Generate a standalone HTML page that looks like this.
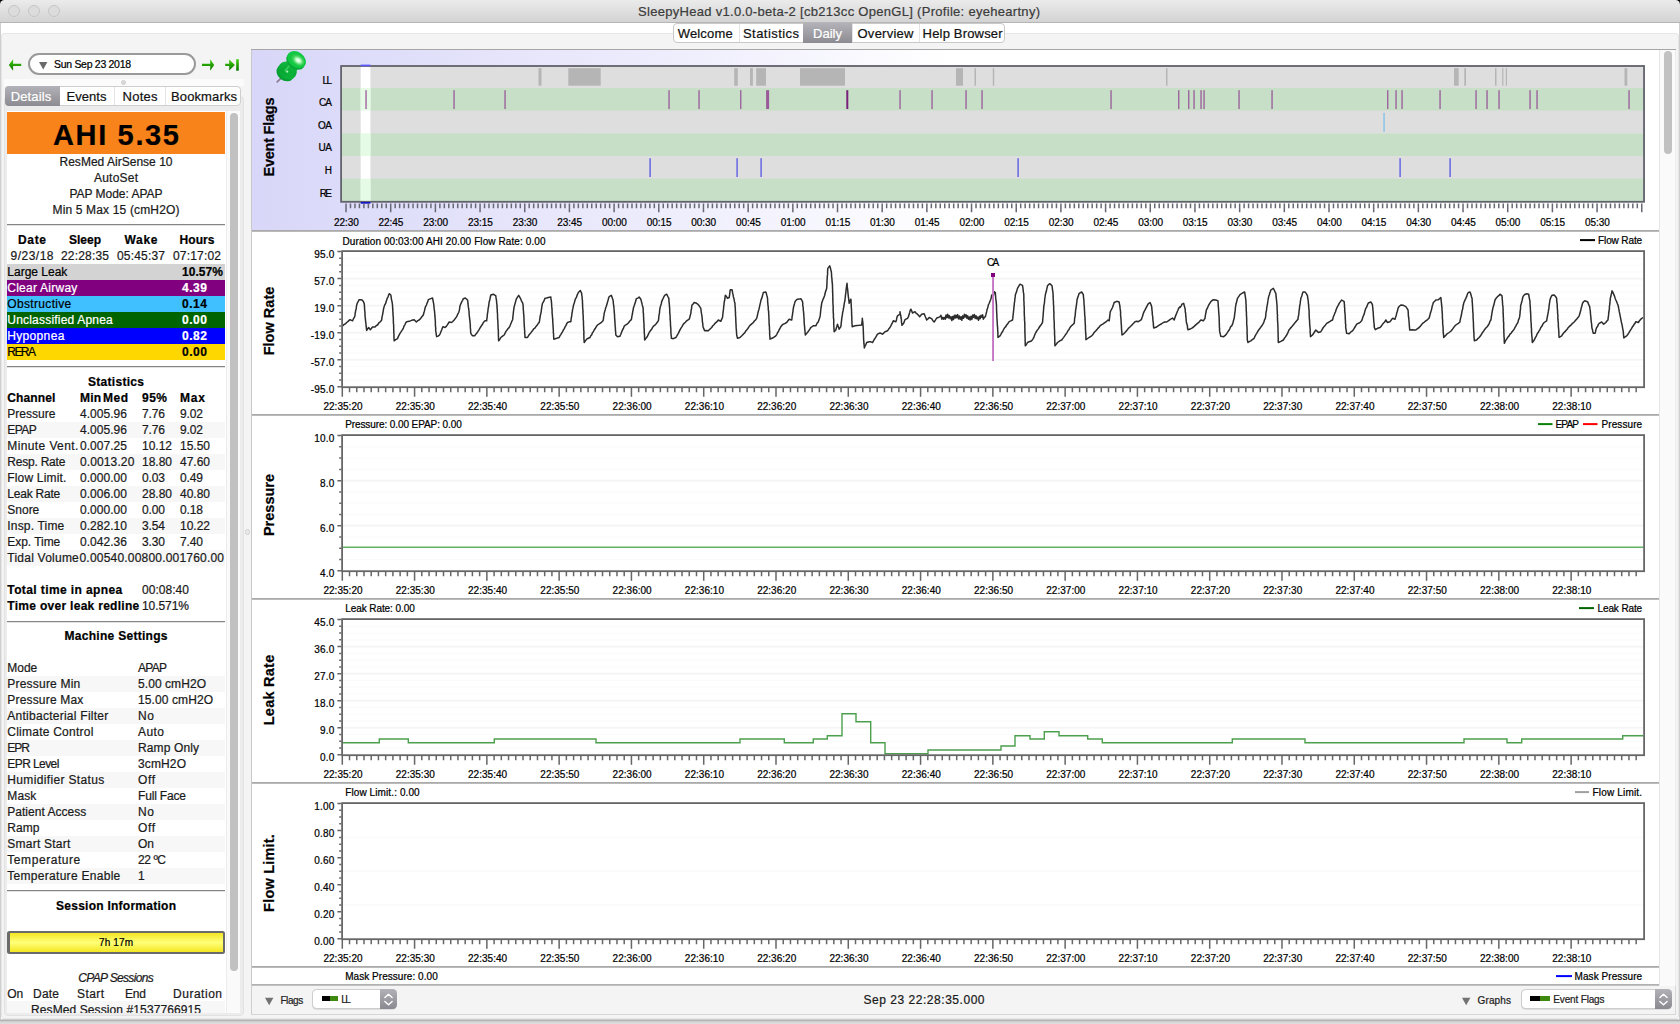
<!DOCTYPE html>
<html><head><meta charset="utf-8"><title>SleepyHead</title>
<style>
html,body{margin:0;padding:0;}
body{width:1680px;height:1024px;position:relative;overflow:hidden;background:#fff;font-family:"Liberation Sans",sans-serif;}
.t{position:absolute;white-space:nowrap;display:block;-webkit-text-stroke:0.22px currentColor;}
.b{position:absolute;box-sizing:border-box;}
svg{position:absolute;left:0;top:0;}
</style></head><body>
<div class="b" style="left:0px;top:0px;width:1680px;height:5px;background:#000;"></div>
<div class="b" style="left:0px;top:0px;width:1680px;height:22.5px;background:linear-gradient(#ebebeb,#d3d3d3);border-bottom:1.5px solid #b6b6b6;border-radius:4.5px 4.5px 0 0;"></div>
<div class="b" style="left:7.5px;top:5px;width:12px;height:12px;border-radius:6px;background:#dcdcdc;border:1px solid #c6c6c6;"></div>
<div class="b" style="left:27.5px;top:5px;width:12px;height:12px;border-radius:6px;background:#dcdcdc;border:1px solid #c6c6c6;"></div>
<div class="b" style="left:47.5px;top:5px;width:12px;height:12px;border-radius:6px;background:#dcdcdc;border:1px solid #c6c6c6;"></div>
<span class="t" style="left:638.00px;top:2.50px;font-size:13px;line-height:17px;color:#3c3c3c;letter-spacing:0.295px;">SleepyHead v1.0.0-beta-2 [cb213cc OpenGL] (Profile: eyeheartny)</span>
<div class="b" style="left:1px;top:33px;width:1678px;height:986px;background:#f4f4f4;border:1px solid #e6e6e6;border-radius:3px;"></div>
<div class="b" style="left:4px;top:96px;width:240px;height:920px;background:#ececec;border:1px solid #e2e2e2;border-radius:4px;"></div>
<div class="b" style="left:0px;top:23px;width:1px;height:1001px;background:#cfcfcf;"></div>
<div class="b" style="left:1679px;top:23px;width:1px;height:1001px;background:#cfcfcf;"></div>
<div class="b" style="left:0px;top:1019px;width:1680px;height:5px;background:linear-gradient(#e6e6e6 0px,#b4b4b4 1px,#b4b4b4 2px,#d6d6d6 2.7px,#dedede 5px);"></div>
<div class="b" style="left:673px;top:23px;width:332px;height:20px;background:#fff;border:1px solid #c9c9c9;border-radius:4px;"></div>
<div class="b" style="left:739px;top:24px;width:1px;height:18px;background:#e4e4e4;"></div>
<div class="b" style="left:803px;top:23px;width:49px;height:20px;background:linear-gradient(#b3b2b8,#8c8b91);"></div>
<div class="b" style="left:852px;top:24px;width:1px;height:18px;background:#e4e4e4;"></div>
<div class="b" style="left:919px;top:24px;width:1px;height:18px;background:#e4e4e4;"></div>
<span class="t" style="left:677.70px;top:24.50px;font-size:13px;line-height:17px;color:#111;letter-spacing:0.176px;">Welcome</span>
<span class="t" style="left:743.00px;top:24.50px;font-size:13px;line-height:17px;color:#111;letter-spacing:0.443px;">Statistics</span>
<span class="t" style="left:813.00px;top:24.50px;font-size:13px;line-height:17px;color:#fff;letter-spacing:0.027px;">Daily</span>
<span class="t" style="left:857.50px;top:24.50px;font-size:13px;line-height:17px;color:#111;letter-spacing:0.260px;">Overview</span>
<span class="t" style="left:922.60px;top:24.50px;font-size:13px;line-height:17px;color:#111;letter-spacing:0.180px;">Help Browser</span>
<svg width="250" height="80" viewBox="0 0 250 80">
<defs><linearGradient id="ga" x1="0" y1="0" x2="0" y2="1"><stop offset="0" stop-color="#45d216"/><stop offset="0.5" stop-color="#25a000"/><stop offset="1" stop-color="#0a7400"/></linearGradient></defs>
<g fill="url(#ga)" stroke="none">
<path d="M8.8 65 L13.1 59.3 L13.1 63.8 L21.2 63.8 L21.2 66.1 L13.1 66.1 L13.1 70.7 Z"/>
<path d="M214.2 65 L210.2 59.2 L210.2 63.8 L202 63.8 L202 66.1 L210.2 66.1 L210.2 70.7 Z"/>
<path d="M234.9 65 L229.2 59.5 L229.2 63.8 L225.2 63.8 L225.2 66.1 L229.2 66.1 L229.2 70.6 Z"/>
<rect x="236.2" y="59.2" width="2.6" height="11.5"/>
</g></svg>
<div class="b" style="left:28px;top:53px;width:168px;height:22px;background:#fff;border:2px solid #9a9a9a;border-radius:11px;"></div>
<svg width="250" height="80"><path d="M39 62 L47.4 62 L43.2 69.6 Z" fill="#6a6a6a"/></svg>
<span class="t" style="left:54.00px;top:57.00px;font-size:10.5px;line-height:14px;color:#000;letter-spacing:-0.296px;">Sun Sep 23 2018</span>
<div class="b" style="left:4px;top:79px;width:240px;height:7px;background:#fbfbfb;"></div>
<div class="b" style="left:121px;top:79.5px;width:5px;height:5px;border-radius:3px;background:#d9d9d9;border:1px solid #cfcfcf;"></div>
<div class="b" style="left:5px;top:86px;width:236px;height:20px;background:#fff;border:1px solid #cfcfcf;border-radius:4px;"></div>
<div class="b" style="left:5px;top:86px;width:55px;height:20px;background:linear-gradient(#b3b2b8,#8c8b91);border-radius:4px 0 0 4px;"></div>
<div class="b" style="left:114px;top:87px;width:1px;height:18px;background:#e4e4e4;"></div>
<div class="b" style="left:165px;top:87px;width:1px;height:18px;background:#e4e4e4;"></div>
<span class="t" style="left:10.75px;top:87.50px;font-size:13px;line-height:17px;color:#fff;letter-spacing:0.128px;">Details</span>
<span class="t" style="left:66.50px;top:87.50px;font-size:13px;line-height:17px;color:#111;letter-spacing:0.052px;">Events</span>
<span class="t" style="left:122.50px;top:87.50px;font-size:13px;line-height:17px;color:#111;letter-spacing:0.260px;">Notes</span>
<span class="t" style="left:171.00px;top:87.50px;font-size:13px;line-height:17px;color:#111;letter-spacing:0.123px;">Bookmarks</span>
<div class="b" style="left:6.5px;top:111px;width:219.5px;height:902px;background:#fff;"></div>
<div class="b" style="left:226px;top:111px;width:14px;height:902px;background:#fafafa;border-left:1px solid #ececec;"></div>
<div class="b" style="left:229.5px;top:113px;width:8px;height:858px;background:#c1c1c1;border-radius:4px;"></div>
<div class="b" style="left:7px;top:112px;width:218px;height:41.5px;background:#f8831b;"></div>
<span class="t" style="left:53.00px;top:115.50px;font-size:29px;line-height:38px;color:#000;font-weight:bold;letter-spacing:1.651px;">AHI 5.35</span>
<span class="t" style="left:59.50px;top:154.00px;font-size:12px;line-height:16px;color:#1a1a1a;letter-spacing:0.016px;">ResMed AirSense 10</span>
<span class="t" style="left:94.00px;top:170.00px;font-size:12px;line-height:16px;color:#1a1a1a;letter-spacing:0.217px;">AutoSet</span>
<span class="t" style="left:69.50px;top:186.00px;font-size:12px;line-height:16px;color:#1a1a1a;letter-spacing:-0.030px;">PAP Mode: APAP</span>
<span class="t" style="left:52.50px;top:202.00px;font-size:12px;line-height:16px;color:#1a1a1a;letter-spacing:0.156px;">Min 5 Max 15 (cmH2O)</span>
<div class="b" style="left:7px;top:224px;width:218px;height:2px;border-top:1px solid #858585;border-bottom:1px solid #e2e2e2;"></div>
<span class="t" style="left:18.00px;top:232.00px;font-size:12px;line-height:16px;color:#000;font-weight:bold;letter-spacing:0.664px;">Date</span>
<span class="t" style="left:69.00px;top:232.00px;font-size:12px;line-height:16px;color:#000;font-weight:bold;">Sleep</span>
<span class="t" style="left:124.50px;top:232.00px;font-size:12px;line-height:16px;color:#000;font-weight:bold;letter-spacing:0.699px;">Wake</span>
<span class="t" style="left:179.50px;top:232.00px;font-size:12px;line-height:16px;color:#000;font-weight:bold;letter-spacing:0.083px;">Hours</span>
<span class="t" style="left:10.50px;top:248.00px;font-size:12px;line-height:16px;color:#1a1a1a;letter-spacing:0.494px;">9/23/18</span>
<span class="t" style="left:61.00px;top:248.00px;font-size:12px;line-height:16px;color:#1a1a1a;letter-spacing:0.184px;">22:28:35</span>
<span class="t" style="left:117.00px;top:248.00px;font-size:12px;line-height:16px;color:#1a1a1a;letter-spacing:0.184px;">05:45:37</span>
<span class="t" style="left:173.00px;top:248.00px;font-size:12px;line-height:16px;color:#1a1a1a;letter-spacing:0.184px;">07:17:02</span>
<div class="b" style="left:7px;top:264px;width:218px;height:16px;background:#d3d3d3;"></div>
<span class="t" style="left:7.30px;top:264.00px;font-size:12px;line-height:16px;color:#000;letter-spacing:-0.005px;">Large Leak</span>
<span class="t" style="left:182.00px;top:264.00px;font-size:12px;line-height:16px;color:#000;font-weight:bold;letter-spacing:0.060px;">10.57%</span>
<div class="b" style="left:7px;top:280px;width:218px;height:16px;background:#800080;"></div>
<span class="t" style="left:7.30px;top:280.00px;font-size:12px;line-height:16px;color:#fff;letter-spacing:0.241px;">Clear Airway</span>
<span class="t" style="left:182.00px;top:280.00px;font-size:12px;line-height:16px;color:#fff;font-weight:bold;letter-spacing:0.548px;">4.39</span>
<div class="b" style="left:7px;top:296px;width:218px;height:16px;background:#40c0ff;"></div>
<span class="t" style="left:7.30px;top:296.00px;font-size:12px;line-height:16px;color:#000;letter-spacing:0.331px;">Obstructive</span>
<span class="t" style="left:182.00px;top:296.00px;font-size:12px;line-height:16px;color:#000;font-weight:bold;letter-spacing:0.548px;">0.14</span>
<div class="b" style="left:7px;top:312px;width:218px;height:16px;background:#006400;"></div>
<span class="t" style="left:7.30px;top:312.00px;font-size:12px;line-height:16px;color:#fff;letter-spacing:0.202px;">Unclassified Apnea</span>
<span class="t" style="left:182.00px;top:312.00px;font-size:12px;line-height:16px;color:#fff;font-weight:bold;letter-spacing:0.548px;">0.00</span>
<div class="b" style="left:7px;top:328px;width:218px;height:16px;background:#0000ff;"></div>
<span class="t" style="left:7.30px;top:328.00px;font-size:12px;line-height:16px;color:#fff;letter-spacing:0.328px;">Hypopnea</span>
<span class="t" style="left:182.00px;top:328.00px;font-size:12px;line-height:16px;color:#fff;font-weight:bold;letter-spacing:0.548px;">0.82</span>
<div class="b" style="left:7px;top:344px;width:218px;height:16px;background:#ffd700;"></div>
<span class="t" style="left:7.30px;top:344.00px;font-size:12px;line-height:16px;color:#000;letter-spacing:-1.580px;">RERA</span>
<span class="t" style="left:182.00px;top:344.00px;font-size:12px;line-height:16px;color:#000;font-weight:bold;letter-spacing:0.548px;">0.00</span>
<div class="b" style="left:7px;top:366px;width:218px;height:2px;border-top:1px solid #858585;border-bottom:1px solid #e2e2e2;"></div>
<span class="t" style="left:88.00px;top:374.00px;font-size:12px;line-height:16px;color:#000;font-weight:bold;letter-spacing:0.294px;">Statistics</span>
<span class="t" style="left:7.30px;top:390.00px;font-size:12px;line-height:16px;color:#000;font-weight:bold;letter-spacing:0.111px;">Channel</span>
<span class="t" style="left:80.00px;top:390.00px;font-size:12px;line-height:16px;color:#000;font-weight:bold;letter-spacing:0.170px;">Min</span>
<span class="t" style="left:103.00px;top:390.00px;font-size:12px;line-height:16px;color:#000;font-weight:bold;letter-spacing:0.500px;">Med</span>
<span class="t" style="left:142.00px;top:390.00px;font-size:12px;line-height:16px;color:#000;font-weight:bold;letter-spacing:0.491px;">95%</span>
<span class="t" style="left:180.00px;top:390.00px;font-size:12px;line-height:16px;color:#000;font-weight:bold;letter-spacing:0.828px;">Max</span>
<span class="t" style="left:7.30px;top:406.00px;font-size:12px;line-height:16px;color:#1a1a1a;">Pressure</span>
<span class="t" style="left:80.00px;top:406.00px;font-size:12px;line-height:16px;color:#1a1a1a;letter-spacing:0.042px;">4.005.96</span>
<span class="t" style="left:142.00px;top:406.00px;font-size:12px;line-height:16px;color:#1a1a1a;letter-spacing:-0.118px;">7.76</span>
<span class="t" style="left:180.00px;top:406.00px;font-size:12px;line-height:16px;color:#1a1a1a;letter-spacing:-0.118px;">9.02</span>
<div class="b" style="left:7px;top:422px;width:218px;height:16px;background:#f7f7f7;"></div>
<span class="t" style="left:7.30px;top:422.00px;font-size:12px;line-height:16px;color:#1a1a1a;letter-spacing:-0.543px;">EPAP</span>
<span class="t" style="left:80.00px;top:422.00px;font-size:12px;line-height:16px;color:#1a1a1a;letter-spacing:0.042px;">4.005.96</span>
<span class="t" style="left:142.00px;top:422.00px;font-size:12px;line-height:16px;color:#1a1a1a;letter-spacing:-0.118px;">7.76</span>
<span class="t" style="left:180.00px;top:422.00px;font-size:12px;line-height:16px;color:#1a1a1a;letter-spacing:-0.118px;">9.02</span>
<span class="t" style="left:7.30px;top:438.00px;font-size:12px;line-height:16px;color:#1a1a1a;letter-spacing:0.390px;">Minute Vent.</span>
<span class="t" style="left:80.00px;top:438.00px;font-size:12px;line-height:16px;color:#1a1a1a;letter-spacing:0.042px;">0.007.25</span>
<span class="t" style="left:142.00px;top:438.00px;font-size:12px;line-height:16px;color:#1a1a1a;letter-spacing:-0.007px;">10.12</span>
<span class="t" style="left:180.00px;top:438.00px;font-size:12px;line-height:16px;color:#1a1a1a;letter-spacing:-0.007px;">15.50</span>
<div class="b" style="left:7px;top:454px;width:218px;height:16px;background:#f7f7f7;"></div>
<span class="t" style="left:7.30px;top:454.00px;font-size:12px;line-height:16px;color:#1a1a1a;letter-spacing:-0.225px;">Resp. Rate</span>
<span class="t" style="left:80.00px;top:454.00px;font-size:12px;line-height:16px;color:#1a1a1a;letter-spacing:0.115px;">0.0013.20</span>
<span class="t" style="left:142.00px;top:454.00px;font-size:12px;line-height:16px;color:#1a1a1a;letter-spacing:-0.007px;">18.80</span>
<span class="t" style="left:180.00px;top:454.00px;font-size:12px;line-height:16px;color:#1a1a1a;letter-spacing:-0.007px;">47.60</span>
<span class="t" style="left:7.30px;top:470.00px;font-size:12px;line-height:16px;color:#1a1a1a;letter-spacing:0.166px;">Flow Limit.</span>
<span class="t" style="left:80.00px;top:470.00px;font-size:12px;line-height:16px;color:#1a1a1a;letter-spacing:0.042px;">0.000.00</span>
<span class="t" style="left:142.00px;top:470.00px;font-size:12px;line-height:16px;color:#1a1a1a;letter-spacing:-0.118px;">0.03</span>
<span class="t" style="left:180.00px;top:470.00px;font-size:12px;line-height:16px;color:#1a1a1a;letter-spacing:-0.118px;">0.49</span>
<div class="b" style="left:7px;top:486px;width:218px;height:16px;background:#f7f7f7;"></div>
<span class="t" style="left:7.30px;top:486.00px;font-size:12px;line-height:16px;color:#1a1a1a;letter-spacing:-0.213px;">Leak Rate</span>
<span class="t" style="left:80.00px;top:486.00px;font-size:12px;line-height:16px;color:#1a1a1a;letter-spacing:0.042px;">0.006.00</span>
<span class="t" style="left:142.00px;top:486.00px;font-size:12px;line-height:16px;color:#1a1a1a;letter-spacing:-0.007px;">28.80</span>
<span class="t" style="left:180.00px;top:486.00px;font-size:12px;line-height:16px;color:#1a1a1a;letter-spacing:-0.007px;">40.80</span>
<span class="t" style="left:7.30px;top:502.00px;font-size:12px;line-height:16px;color:#1a1a1a;letter-spacing:-0.005px;">Snore</span>
<span class="t" style="left:80.00px;top:502.00px;font-size:12px;line-height:16px;color:#1a1a1a;letter-spacing:0.042px;">0.000.00</span>
<span class="t" style="left:142.00px;top:502.00px;font-size:12px;line-height:16px;color:#1a1a1a;letter-spacing:-0.118px;">0.00</span>
<span class="t" style="left:180.00px;top:502.00px;font-size:12px;line-height:16px;color:#1a1a1a;letter-spacing:-0.118px;">0.18</span>
<div class="b" style="left:7px;top:518px;width:218px;height:16px;background:#f7f7f7;"></div>
<span class="t" style="left:7.30px;top:518.00px;font-size:12px;line-height:16px;color:#1a1a1a;letter-spacing:0.183px;">Insp. Time</span>
<span class="t" style="left:80.00px;top:518.00px;font-size:12px;line-height:16px;color:#1a1a1a;letter-spacing:0.042px;">0.282.10</span>
<span class="t" style="left:142.00px;top:518.00px;font-size:12px;line-height:16px;color:#1a1a1a;letter-spacing:-0.118px;">3.54</span>
<span class="t" style="left:180.00px;top:518.00px;font-size:12px;line-height:16px;color:#1a1a1a;letter-spacing:-0.007px;">10.22</span>
<span class="t" style="left:7.30px;top:534.00px;font-size:12px;line-height:16px;color:#1a1a1a;letter-spacing:-0.044px;">Exp. Time</span>
<span class="t" style="left:80.00px;top:534.00px;font-size:12px;line-height:16px;color:#1a1a1a;letter-spacing:0.042px;">0.042.36</span>
<span class="t" style="left:142.00px;top:534.00px;font-size:12px;line-height:16px;color:#1a1a1a;letter-spacing:-0.118px;">3.30</span>
<span class="t" style="left:180.00px;top:534.00px;font-size:12px;line-height:16px;color:#1a1a1a;letter-spacing:-0.118px;">7.40</span>
<div class="b" style="left:7px;top:550px;width:218px;height:16px;background:#f7f7f7;"></div>
<span class="t" style="left:7.30px;top:550.00px;font-size:12px;line-height:16px;color:#1a1a1a;letter-spacing:0.234px;">Tidal Volume</span>
<span class="t" style="left:79.50px;top:550.00px;font-size:12px;line-height:16px;color:#1a1a1a;letter-spacing:0.199px;">0.00540.00800.001760.00</span>
<span class="t" style="left:7.30px;top:582.00px;font-size:12px;line-height:16px;color:#000;font-weight:bold;letter-spacing:0.400px;">Total time in apnea</span>
<span class="t" style="left:142.00px;top:582.00px;font-size:12px;line-height:16px;color:#1a1a1a;letter-spacing:0.042px;">00:08:40</span>
<span class="t" style="left:7.30px;top:598.00px;font-size:12px;line-height:16px;color:#000;font-weight:bold;letter-spacing:0.293px;">Time over leak redline</span>
<span class="t" style="left:142.00px;top:598.00px;font-size:12px;line-height:16px;color:#1a1a1a;letter-spacing:-0.062px;">10.571%</span>
<div class="b" style="left:7px;top:621px;width:218px;height:2px;border-top:1px solid #858585;border-bottom:1px solid #e2e2e2;"></div>
<span class="t" style="left:64.50px;top:628.00px;font-size:12px;line-height:16px;color:#000;font-weight:bold;letter-spacing:0.288px;">Machine Settings</span>
<span class="t" style="left:7.30px;top:660.00px;font-size:12px;line-height:16px;color:#1a1a1a;letter-spacing:-0.006px;">Mode</span>
<span class="t" style="left:138.00px;top:660.00px;font-size:12px;line-height:16px;color:#1a1a1a;letter-spacing:-0.709px;">APAP</span>
<div class="b" style="left:7px;top:676px;width:218px;height:16px;background:#f7f7f7;"></div>
<span class="t" style="left:7.30px;top:676.00px;font-size:12px;line-height:16px;color:#1a1a1a;letter-spacing:0.210px;">Pressure Min</span>
<span class="t" style="left:138.00px;top:676.00px;font-size:12px;line-height:16px;color:#1a1a1a;letter-spacing:0.071px;">5.00 cmH2O</span>
<span class="t" style="left:7.30px;top:692.00px;font-size:12px;line-height:16px;color:#1a1a1a;letter-spacing:0.180px;">Pressure Max</span>
<span class="t" style="left:138.00px;top:692.00px;font-size:12px;line-height:16px;color:#1a1a1a;letter-spacing:0.097px;">15.00 cmH2O</span>
<div class="b" style="left:7px;top:708px;width:218px;height:16px;background:#f7f7f7;"></div>
<span class="t" style="left:7.30px;top:708.00px;font-size:12px;line-height:16px;color:#1a1a1a;letter-spacing:0.261px;">Antibacterial Filter</span>
<span class="t" style="left:138.00px;top:708.00px;font-size:12px;line-height:16px;color:#1a1a1a;letter-spacing:0.661px;">No</span>
<span class="t" style="left:7.30px;top:724.00px;font-size:12px;line-height:16px;color:#1a1a1a;letter-spacing:0.236px;">Climate Control</span>
<span class="t" style="left:138.00px;top:724.00px;font-size:12px;line-height:16px;color:#1a1a1a;letter-spacing:0.438px;">Auto</span>
<div class="b" style="left:7px;top:740px;width:218px;height:16px;background:#f7f7f7;"></div>
<span class="t" style="left:7.30px;top:740.00px;font-size:12px;line-height:16px;color:#1a1a1a;letter-spacing:-1.088px;">EPR</span>
<span class="t" style="left:138.00px;top:740.00px;font-size:12px;line-height:16px;color:#1a1a1a;letter-spacing:0.123px;">Ramp Only</span>
<span class="t" style="left:7.30px;top:756.00px;font-size:12px;line-height:16px;color:#1a1a1a;letter-spacing:-0.587px;">EPR Level</span>
<span class="t" style="left:138.00px;top:756.00px;font-size:12px;line-height:16px;color:#1a1a1a;letter-spacing:0.131px;">3cmH2O</span>
<div class="b" style="left:7px;top:772px;width:218px;height:16px;background:#f7f7f7;"></div>
<span class="t" style="left:7.30px;top:772.00px;font-size:12px;line-height:16px;color:#1a1a1a;letter-spacing:0.352px;">Humidifier Status</span>
<span class="t" style="left:138.00px;top:772.00px;font-size:12px;line-height:16px;color:#1a1a1a;letter-spacing:0.607px;">Off</span>
<span class="t" style="left:7.30px;top:788.00px;font-size:12px;line-height:16px;color:#1a1a1a;letter-spacing:0.110px;">Mask</span>
<span class="t" style="left:138.00px;top:788.00px;font-size:12px;line-height:16px;color:#1a1a1a;letter-spacing:-0.168px;">Full Face</span>
<div class="b" style="left:7px;top:804px;width:218px;height:16px;background:#f7f7f7;"></div>
<span class="t" style="left:7.30px;top:804.00px;font-size:12px;line-height:16px;color:#1a1a1a;letter-spacing:0.022px;">Patient Access</span>
<span class="t" style="left:138.00px;top:804.00px;font-size:12px;line-height:16px;color:#1a1a1a;letter-spacing:0.661px;">No</span>
<span class="t" style="left:7.30px;top:820.00px;font-size:12px;line-height:16px;color:#1a1a1a;">Ramp</span>
<span class="t" style="left:138.00px;top:820.00px;font-size:12px;line-height:16px;color:#1a1a1a;letter-spacing:0.607px;">Off</span>
<div class="b" style="left:7px;top:836px;width:218px;height:16px;background:#f7f7f7;"></div>
<span class="t" style="left:7.30px;top:836.00px;font-size:12px;line-height:16px;color:#1a1a1a;letter-spacing:0.232px;">Smart Start</span>
<span class="t" style="left:138.00px;top:836.00px;font-size:12px;line-height:16px;color:#1a1a1a;letter-spacing:-0.008px;">On</span>
<span class="t" style="left:7.30px;top:852.00px;font-size:12px;line-height:16px;color:#1a1a1a;letter-spacing:0.563px;">Temperature</span>
<span class="t" style="left:138.00px;top:852.00px;font-size:12px;line-height:16px;color:#1a1a1a;letter-spacing:-0.432px;">22 ºC</span>
<div class="b" style="left:7px;top:868px;width:218px;height:16px;background:#f7f7f7;"></div>
<span class="t" style="left:7.30px;top:868.00px;font-size:12px;line-height:16px;color:#1a1a1a;letter-spacing:0.290px;">Temperature Enable</span>
<span class="t" style="left:138.00px;top:868.00px;font-size:12px;line-height:16px;color:#1a1a1a;">1</span>
<div class="b" style="left:7px;top:890px;width:218px;height:2px;border-top:1px solid #858585;border-bottom:1px solid #e2e2e2;"></div>
<span class="t" style="left:56.00px;top:898.00px;font-size:12px;line-height:16px;color:#000;font-weight:bold;letter-spacing:0.258px;">Session Information</span>
<div class="b" style="left:7px;top:930.5px;width:218px;height:23.3px;background:linear-gradient(#f3e622,#ffff78 50%,#f3e622);border:2.4px solid #6a6a6a;border-left-width:3px;border-right-width:2.6px;border-radius:2.5px;"></div>
<span class="t" style="left:99.00px;top:935.50px;font-size:10px;line-height:13px;color:#000;letter-spacing:0.130px;">7h 17m</span>
<span class="t" style="left:78.25px;top:970.00px;font-size:12px;line-height:16px;color:#1a1a1a;font-style:italic;letter-spacing:-0.656px;">CPAP Sessions</span>
<span class="t" style="left:7.30px;top:986.00px;font-size:12px;line-height:16px;color:#1a1a1a;letter-spacing:-0.008px;">On</span>
<span class="t" style="left:33.00px;top:986.00px;font-size:12px;line-height:16px;color:#1a1a1a;letter-spacing:0.218px;">Date</span>
<span class="t" style="left:77.00px;top:986.00px;font-size:12px;line-height:16px;color:#1a1a1a;letter-spacing:0.414px;">Start</span>
<span class="t" style="left:125.00px;top:986.00px;font-size:12px;line-height:16px;color:#1a1a1a;letter-spacing:-0.176px;">End</span>
<span class="t" style="left:173.00px;top:986.00px;font-size:12px;line-height:16px;color:#1a1a1a;letter-spacing:0.521px;">Duration</span>
<div class="b" style="left:7px;top:1001px;width:218px;height:12px;background:#f7f7f7;"></div>
<div class="b" style="left:4px;top:1000px;width:222px;height:13px;overflow:hidden;">
<span class="t" style="left:27.00px;top:2.00px;font-size:12px;line-height:16px;color:#1a1a1a;letter-spacing:0.102px;">ResMed Session #1537766915</span>
</div>
<div class="b" style="left:244.7px;top:529.2px;width:5.6px;height:5.6px;border-radius:2.8px;background:#e9e9e9;border:1px solid #d0d0d0;"></div>
<div class="b" style="left:251px;top:49px;width:1409px;height:183px;background:linear-gradient(90deg,#d8d7f9 0px,#d9d8f9 30px,#e8e7fb 300px,#f1f0fd 470px,#fff 700px);"></div>
<div class="b" style="left:251px;top:230px;width:1408px;height:2px;background:linear-gradient(#a2a2a2,#c2c2c2);"></div>
<div class="b" style="left:251px;top:232px;width:1409px;height:182px;background:#fff;"></div>
<div class="b" style="left:251px;top:414px;width:1408px;height:2px;background:linear-gradient(#a2a2a2,#c2c2c2);"></div>
<div class="b" style="left:251px;top:416px;width:1409px;height:182px;background:#fff;"></div>
<div class="b" style="left:251px;top:598px;width:1408px;height:2px;background:linear-gradient(#a2a2a2,#c2c2c2);"></div>
<div class="b" style="left:251px;top:600px;width:1409px;height:182px;background:#fff;"></div>
<div class="b" style="left:251px;top:782px;width:1408px;height:2px;background:linear-gradient(#a2a2a2,#c2c2c2);"></div>
<div class="b" style="left:251px;top:784px;width:1409px;height:182px;background:#fff;"></div>
<div class="b" style="left:251px;top:966px;width:1408px;height:2px;background:linear-gradient(#a2a2a2,#c2c2c2);"></div>
<div class="b" style="left:251px;top:968px;width:1409px;height:16px;background:#fff;"></div>
<div class="b" style="left:251px;top:984px;width:1408px;height:2px;background:linear-gradient(#a8a8a8,#cacaca);"></div>
<div class="b" style="left:251px;top:49px;width:1px;height:937px;background:#c8c8c8;"></div>
<div class="b" style="left:1659px;top:49px;width:17px;height:937px;background:#fafafa;border-left:1px solid #e6e6e6;border-right:1px solid #ededed;"></div>
<div class="b" style="left:1663.5px;top:51px;width:8.5px;height:102.5px;background:#c1c1c1;border-radius:4.25px;"></div>
<div class="b" style="left:251px;top:49px;width:1425px;height:1px;background:#a6a6a6;"></div>
<svg width="1680" height="1024" viewBox="0 0 1680 1024" shape-rendering="auto"><rect x="341.3" y="65.30" width="1303.1000000000001" height="22.97" fill="#dedede"/><rect x="341.3" y="87.97" width="1303.1000000000001" height="22.97" fill="#c6dfc6"/><rect x="341.3" y="110.64" width="1303.1000000000001" height="22.97" fill="#dedede"/><rect x="341.3" y="133.31" width="1303.1000000000001" height="22.97" fill="#c6dfc6"/><rect x="341.3" y="155.98" width="1303.1000000000001" height="22.97" fill="#dedede"/><rect x="341.3" y="178.65" width="1303.1000000000001" height="22.97" fill="#c6dfc6"/><rect x="360.7" y="66" width="9.7" height="136" fill="#fff"/><rect x="360.7" y="87.97" width="9.7" height="22.67" fill="#e6fbe6"/><rect x="360.7" y="133.31" width="9.7" height="22.67" fill="#e6fbe6"/><rect x="360.7" y="178.65" width="9.7" height="22.67" fill="#e6fbe6"/><rect x="538.5" y="68.2" width="3.00" height="17.5" fill="#b5b5b5"/><rect x="568.3" y="68.2" width="32.40" height="17.5" fill="#b5b5b5"/><rect x="734.2" y="68.2" width="3.60" height="17.5" fill="#b5b5b5"/><rect x="750" y="68.2" width="2.90" height="17.5" fill="#b5b5b5"/><rect x="756.2" y="68.2" width="9.80" height="17.5" fill="#b5b5b5"/><rect x="800" y="68.2" width="45.00" height="17.5" fill="#b5b5b5"/><rect x="956" y="68.2" width="7.00" height="17.5" fill="#b5b5b5"/><rect x="974.5" y="68.2" width="1.50" height="17.5" fill="#b5b5b5"/><rect x="992.8" y="68.2" width="1.40" height="17.5" fill="#b5b5b5"/><rect x="1166" y="68.2" width="1.50" height="17.5" fill="#b5b5b5"/><rect x="1454" y="68.2" width="4.70" height="17.5" fill="#b5b5b5"/><rect x="1464.3" y="68.2" width="1.70" height="17.5" fill="#b5b5b5"/><rect x="1495" y="68.2" width="1.50" height="17.5" fill="#b5b5b5"/><rect x="1502.2" y="68.2" width="1.20" height="17.5" fill="#b5b5b5"/><rect x="1505.8" y="68.2" width="1.20" height="17.5" fill="#b5b5b5"/><rect x="1624.5" y="68.2" width="2.80" height="17.5" fill="#b5b5b5"/><rect x="365.40" y="90.17" width="1.3" height="18.87" fill="#9a5a9a"/><rect x="453.40" y="90.17" width="1.3" height="18.87" fill="#9a5a9a"/><rect x="504.40" y="90.17" width="1.3" height="18.87" fill="#9a5a9a"/><rect x="668.40" y="90.17" width="1.3" height="18.87" fill="#9a5a9a"/><rect x="698.40" y="90.17" width="1.3" height="18.87" fill="#9a5a9a"/><rect x="740.10" y="90.17" width="1.3" height="18.87" fill="#9a5a9a"/><rect x="899.40" y="90.17" width="1.3" height="18.87" fill="#9a5a9a"/><rect x="931.40" y="90.17" width="1.3" height="18.87" fill="#9a5a9a"/><rect x="965.40" y="90.17" width="1.3" height="18.87" fill="#9a5a9a"/><rect x="981.40" y="90.17" width="1.3" height="18.87" fill="#9a5a9a"/><rect x="1110.40" y="90.17" width="1.3" height="18.87" fill="#9a5a9a"/><rect x="1178.10" y="90.17" width="1.3" height="18.87" fill="#9a5a9a"/><rect x="1188.10" y="90.17" width="1.3" height="18.87" fill="#9a5a9a"/><rect x="1193.40" y="90.17" width="1.3" height="18.87" fill="#9a5a9a"/><rect x="1200.40" y="90.17" width="1.3" height="18.87" fill="#9a5a9a"/><rect x="1203.40" y="90.17" width="1.3" height="18.87" fill="#9a5a9a"/><rect x="1238.40" y="90.17" width="1.3" height="18.87" fill="#9a5a9a"/><rect x="1271.40" y="90.17" width="1.3" height="18.87" fill="#9a5a9a"/><rect x="1387.10" y="90.17" width="1.3" height="18.87" fill="#9a5a9a"/><rect x="1395.40" y="90.17" width="1.3" height="18.87" fill="#9a5a9a"/><rect x="1401.40" y="90.17" width="1.3" height="18.87" fill="#9a5a9a"/><rect x="1439.40" y="90.17" width="1.3" height="18.87" fill="#9a5a9a"/><rect x="1475.40" y="90.17" width="1.3" height="18.87" fill="#9a5a9a"/><rect x="1486.40" y="90.17" width="1.3" height="18.87" fill="#9a5a9a"/><rect x="1498.40" y="90.17" width="1.3" height="18.87" fill="#9a5a9a"/><rect x="1529.40" y="90.17" width="1.3" height="18.87" fill="#9a5a9a"/><rect x="1536.40" y="90.17" width="1.3" height="18.87" fill="#9a5a9a"/><rect x="1628.40" y="90.17" width="1.3" height="18.87" fill="#9a5a9a"/><rect x="766.10" y="90.17" width="3" height="18.87" fill="#9a5a9a"/><rect x="846.30" y="90.17" width="2" height="18.87" fill="#7a1f7a"/><rect x="1383.4" y="112.84" width="1.3" height="18.87" fill="#7fc0e8"/><rect x="649.40" y="158.18" width="1.4" height="18.87" fill="#5f5fe6"/><rect x="736.40" y="158.18" width="1.4" height="18.87" fill="#5f5fe6"/><rect x="760.40" y="158.18" width="1.4" height="18.87" fill="#5f5fe6"/><rect x="1017.40" y="158.18" width="1.4" height="18.87" fill="#5f5fe6"/><rect x="1399.40" y="158.18" width="1.4" height="18.87" fill="#5f5fe6"/><rect x="1449.40" y="158.18" width="1.4" height="18.87" fill="#5f5fe6"/><rect x="341.1" y="66" width="1302.95" height="135.8" fill="none" stroke="#62626c" stroke-width="1.8"/><rect x="360.7" y="64.6" width="9.7" height="1.6" fill="#5a5aff"/><rect x="360.7" y="202" width="9.7" height="1.7" fill="#1515c8"/><path d="M346.02 203.5v8.8M350.49 203.5v4.8M354.96 203.5v4.8M359.42 203.5v4.8M363.89 203.5v4.8M368.36 203.5v4.8M372.83 203.5v4.8M377.30 203.5v4.8M381.76 203.5v4.8M386.23 203.5v4.8M390.70 203.5v8.8M395.17 203.5v4.8M399.64 203.5v4.8M404.10 203.5v4.8M408.57 203.5v4.8M413.04 203.5v4.8M417.51 203.5v4.8M421.98 203.5v4.8M426.45 203.5v4.8M430.91 203.5v4.8M435.38 203.5v8.8M439.85 203.5v4.8M444.32 203.5v4.8M448.79 203.5v4.8M453.25 203.5v4.8M457.72 203.5v4.8M462.19 203.5v4.8M466.66 203.5v4.8M471.13 203.5v4.8M475.59 203.5v4.8M480.06 203.5v8.8M484.53 203.5v4.8M489.00 203.5v4.8M493.47 203.5v4.8M497.93 203.5v4.8M502.40 203.5v4.8M506.87 203.5v4.8M511.34 203.5v4.8M515.81 203.5v4.8M520.27 203.5v4.8M524.74 203.5v8.8M529.21 203.5v4.8M533.68 203.5v4.8M538.15 203.5v4.8M542.62 203.5v4.8M547.08 203.5v4.8M551.55 203.5v4.8M556.02 203.5v4.8M560.49 203.5v4.8M564.96 203.5v4.8M569.42 203.5v8.8M573.89 203.5v4.8M578.36 203.5v4.8M582.83 203.5v4.8M587.30 203.5v4.8M591.76 203.5v4.8M596.23 203.5v4.8M600.70 203.5v4.8M605.17 203.5v4.8M609.64 203.5v4.8M614.10 203.5v8.8M618.57 203.5v4.8M623.04 203.5v4.8M627.51 203.5v4.8M631.98 203.5v4.8M636.45 203.5v4.8M640.91 203.5v4.8M645.38 203.5v4.8M649.85 203.5v4.8M654.32 203.5v4.8M658.79 203.5v8.8M663.25 203.5v4.8M667.72 203.5v4.8M672.19 203.5v4.8M676.66 203.5v4.8M681.13 203.5v4.8M685.59 203.5v4.8M690.06 203.5v4.8M694.53 203.5v4.8M699.00 203.5v4.8M703.47 203.5v8.8M707.93 203.5v4.8M712.40 203.5v4.8M716.87 203.5v4.8M721.34 203.5v4.8M725.81 203.5v4.8M730.27 203.5v4.8M734.74 203.5v4.8M739.21 203.5v4.8M743.68 203.5v4.8M748.15 203.5v8.8M752.62 203.5v4.8M757.08 203.5v4.8M761.55 203.5v4.8M766.02 203.5v4.8M770.49 203.5v4.8M774.96 203.5v4.8M779.42 203.5v4.8M783.89 203.5v4.8M788.36 203.5v4.8M792.83 203.5v8.8M797.30 203.5v4.8M801.76 203.5v4.8M806.23 203.5v4.8M810.70 203.5v4.8M815.17 203.5v4.8M819.64 203.5v4.8M824.10 203.5v4.8M828.57 203.5v4.8M833.04 203.5v4.8M837.51 203.5v8.8M841.98 203.5v4.8M846.44 203.5v4.8M850.91 203.5v4.8M855.38 203.5v4.8M859.85 203.5v4.8M864.32 203.5v4.8M868.79 203.5v4.8M873.25 203.5v4.8M877.72 203.5v4.8M882.19 203.5v8.8M886.66 203.5v4.8M891.13 203.5v4.8M895.59 203.5v4.8M900.06 203.5v4.8M904.53 203.5v4.8M909.00 203.5v4.8M913.47 203.5v4.8M917.93 203.5v4.8M922.40 203.5v4.8M926.87 203.5v8.8M931.34 203.5v4.8M935.81 203.5v4.8M940.27 203.5v4.8M944.74 203.5v4.8M949.21 203.5v4.8M953.68 203.5v4.8M958.15 203.5v4.8M962.61 203.5v4.8M967.08 203.5v4.8M971.55 203.5v8.8M976.02 203.5v4.8M980.49 203.5v4.8M984.96 203.5v4.8M989.42 203.5v4.8M993.89 203.5v4.8M998.36 203.5v4.8M1002.83 203.5v4.8M1007.30 203.5v4.8M1011.76 203.5v4.8M1016.23 203.5v8.8M1020.70 203.5v4.8M1025.17 203.5v4.8M1029.64 203.5v4.8M1034.10 203.5v4.8M1038.57 203.5v4.8M1043.04 203.5v4.8M1047.51 203.5v4.8M1051.98 203.5v4.8M1056.44 203.5v4.8M1060.91 203.5v8.8M1065.38 203.5v4.8M1069.85 203.5v4.8M1074.32 203.5v4.8M1078.79 203.5v4.8M1083.25 203.5v4.8M1087.72 203.5v4.8M1092.19 203.5v4.8M1096.66 203.5v4.8M1101.13 203.5v4.8M1105.59 203.5v8.8M1110.06 203.5v4.8M1114.53 203.5v4.8M1119.00 203.5v4.8M1123.47 203.5v4.8M1127.93 203.5v4.8M1132.40 203.5v4.8M1136.87 203.5v4.8M1141.34 203.5v4.8M1145.81 203.5v4.8M1150.27 203.5v8.8M1154.74 203.5v4.8M1159.21 203.5v4.8M1163.68 203.5v4.8M1168.15 203.5v4.8M1172.61 203.5v4.8M1177.08 203.5v4.8M1181.55 203.5v4.8M1186.02 203.5v4.8M1190.49 203.5v4.8M1194.96 203.5v8.8M1199.42 203.5v4.8M1203.89 203.5v4.8M1208.36 203.5v4.8M1212.83 203.5v4.8M1217.30 203.5v4.8M1221.76 203.5v4.8M1226.23 203.5v4.8M1230.70 203.5v4.8M1235.17 203.5v4.8M1239.64 203.5v8.8M1244.10 203.5v4.8M1248.57 203.5v4.8M1253.04 203.5v4.8M1257.51 203.5v4.8M1261.98 203.5v4.8M1266.44 203.5v4.8M1270.91 203.5v4.8M1275.38 203.5v4.8M1279.85 203.5v4.8M1284.32 203.5v8.8M1288.78 203.5v4.8M1293.25 203.5v4.8M1297.72 203.5v4.8M1302.19 203.5v4.8M1306.66 203.5v4.8M1311.13 203.5v4.8M1315.59 203.5v4.8M1320.06 203.5v4.8M1324.53 203.5v4.8M1329.00 203.5v8.8M1333.47 203.5v4.8M1337.93 203.5v4.8M1342.40 203.5v4.8M1346.87 203.5v4.8M1351.34 203.5v4.8M1355.81 203.5v4.8M1360.27 203.5v4.8M1364.74 203.5v4.8M1369.21 203.5v4.8M1373.68 203.5v8.8M1378.15 203.5v4.8M1382.61 203.5v4.8M1387.08 203.5v4.8M1391.55 203.5v4.8M1396.02 203.5v4.8M1400.49 203.5v4.8M1404.95 203.5v4.8M1409.42 203.5v4.8M1413.89 203.5v4.8M1418.36 203.5v8.8M1422.83 203.5v4.8M1427.30 203.5v4.8M1431.76 203.5v4.8M1436.23 203.5v4.8M1440.70 203.5v4.8M1445.17 203.5v4.8M1449.64 203.5v4.8M1454.10 203.5v4.8M1458.57 203.5v4.8M1463.04 203.5v8.8M1467.51 203.5v4.8M1471.98 203.5v4.8M1476.44 203.5v4.8M1480.91 203.5v4.8M1485.38 203.5v4.8M1489.85 203.5v4.8M1494.32 203.5v4.8M1498.78 203.5v4.8M1503.25 203.5v4.8M1507.72 203.5v8.8M1512.19 203.5v4.8M1516.66 203.5v4.8M1521.12 203.5v4.8M1525.59 203.5v4.8M1530.06 203.5v4.8M1534.53 203.5v4.8M1539.00 203.5v4.8M1543.47 203.5v4.8M1547.93 203.5v4.8M1552.40 203.5v8.8M1556.87 203.5v4.8M1561.34 203.5v4.8M1565.81 203.5v4.8M1570.27 203.5v4.8M1574.74 203.5v4.8M1579.21 203.5v4.8M1583.68 203.5v4.8M1588.15 203.5v4.8M1592.61 203.5v4.8M1597.08 203.5v8.8M1601.55 203.5v4.8M1606.02 203.5v4.8M1610.49 203.5v4.8M1614.95 203.5v4.8M1619.42 203.5v4.8M1623.89 203.5v4.8M1628.36 203.5v4.8M1632.83 203.5v4.8M1637.30 203.5v4.8M1641.76 203.5v8.8" stroke="#686874" stroke-width="1.5" fill="none"/></svg>
<svg width="1680" height="1024" viewBox="0 0 1680 1024">
<defs>
<radialGradient id="ph" cx="0.55" cy="0.5" r="0.6"><stop offset="0" stop-color="#ffffff"/><stop offset="0.25" stop-color="#c9ffd0"/><stop offset="0.6" stop-color="#3fd45c"/><stop offset="1" stop-color="#0fbf3c"/></radialGradient>
<linearGradient id="pb" x1="0" y1="0" x2="1" y2="1"><stop offset="0" stop-color="#14c043"/><stop offset="0.5" stop-color="#08a634"/><stop offset="1" stop-color="#0bb83b"/></linearGradient>
</defs>
<path d="M277.2 81.9L281.6 77.6" stroke="#8c7c90" stroke-width="1.7" stroke-linecap="round"/>
<ellipse cx="285.6" cy="72.6" rx="9.6" ry="8.2" transform="rotate(38 285.6 72.6)" fill="#07a032"/>
<ellipse cx="287.6" cy="70.4" rx="9.8" ry="8.4" transform="rotate(38 287.6 70.4)" fill="url(#pb)"/>
<path d="M283.5 71.5L290.5 62L298 68.5L291.5 77Z" fill="#0bb23a"/>
<path d="M285.2 70.6L289.5 65.5" stroke="#35cf5a" stroke-width="1.6" stroke-linecap="round"/>
<circle cx="287.2" cy="71.6" r="1.1" fill="#b9f5c2"/>
<ellipse cx="295.6" cy="61.2" rx="10.2" ry="7.6" transform="rotate(36 295.6 61.2)" fill="#0aa636"/>
<ellipse cx="296.6" cy="59.6" rx="10.2" ry="7.6" transform="rotate(36 296.6 59.6)" fill="#10c841"/>
<ellipse cx="297.6" cy="59.9" rx="7.6" ry="5.2" transform="rotate(36 297.6 59.9)" fill="url(#ph)"/>
</svg>
<span class="t" style="left:322.50px;top:74.00px;font-size:10px;line-height:13px;color:#000;letter-spacing:-1.622px;">LL</span>
<span class="t" style="left:319.00px;top:96.00px;font-size:10px;line-height:13px;color:#000;letter-spacing:-0.892px;">CA</span>
<span class="t" style="left:318.00px;top:119.00px;font-size:10px;line-height:13px;color:#000;letter-spacing:-0.448px;">OA</span>
<span class="t" style="left:318.50px;top:141.00px;font-size:10px;line-height:13px;color:#000;letter-spacing:-0.392px;">UA</span>
<span class="t" style="left:324.78px;top:164.00px;font-size:10px;line-height:13px;color:#000;">H</span>
<span class="t" style="left:319.80px;top:187.00px;font-size:10px;line-height:13px;color:#000;letter-spacing:-1.692px;">RE</span>
<span class="t" style="left:333.92px;top:216.00px;font-size:10px;line-height:13px;color:#000;letter-spacing:-0.055px;">22:30</span>
<span class="t" style="left:378.60px;top:216.00px;font-size:10px;line-height:13px;color:#000;letter-spacing:-0.055px;">22:45</span>
<span class="t" style="left:423.28px;top:216.00px;font-size:10px;line-height:13px;color:#000;letter-spacing:-0.055px;">23:00</span>
<span class="t" style="left:467.96px;top:216.00px;font-size:10px;line-height:13px;color:#000;letter-spacing:-0.055px;">23:15</span>
<span class="t" style="left:512.64px;top:216.00px;font-size:10px;line-height:13px;color:#000;letter-spacing:-0.055px;">23:30</span>
<span class="t" style="left:557.32px;top:216.00px;font-size:10px;line-height:13px;color:#000;letter-spacing:-0.055px;">23:45</span>
<span class="t" style="left:602.00px;top:216.00px;font-size:10px;line-height:13px;color:#000;letter-spacing:-0.055px;">00:00</span>
<span class="t" style="left:646.69px;top:216.00px;font-size:10px;line-height:13px;color:#000;letter-spacing:-0.055px;">00:15</span>
<span class="t" style="left:691.37px;top:216.00px;font-size:10px;line-height:13px;color:#000;letter-spacing:-0.055px;">00:30</span>
<span class="t" style="left:736.05px;top:216.00px;font-size:10px;line-height:13px;color:#000;letter-spacing:-0.055px;">00:45</span>
<span class="t" style="left:780.73px;top:216.00px;font-size:10px;line-height:13px;color:#000;letter-spacing:-0.055px;">01:00</span>
<span class="t" style="left:825.41px;top:216.00px;font-size:10px;line-height:13px;color:#000;letter-spacing:-0.055px;">01:15</span>
<span class="t" style="left:870.09px;top:216.00px;font-size:10px;line-height:13px;color:#000;letter-spacing:-0.055px;">01:30</span>
<span class="t" style="left:914.77px;top:216.00px;font-size:10px;line-height:13px;color:#000;letter-spacing:-0.055px;">01:45</span>
<span class="t" style="left:959.45px;top:216.00px;font-size:10px;line-height:13px;color:#000;letter-spacing:-0.055px;">02:00</span>
<span class="t" style="left:1004.13px;top:216.00px;font-size:10px;line-height:13px;color:#000;letter-spacing:-0.055px;">02:15</span>
<span class="t" style="left:1048.81px;top:216.00px;font-size:10px;line-height:13px;color:#000;letter-spacing:-0.055px;">02:30</span>
<span class="t" style="left:1093.49px;top:216.00px;font-size:10px;line-height:13px;color:#000;letter-spacing:-0.055px;">02:45</span>
<span class="t" style="left:1138.17px;top:216.00px;font-size:10px;line-height:13px;color:#000;letter-spacing:-0.055px;">03:00</span>
<span class="t" style="left:1182.86px;top:216.00px;font-size:10px;line-height:13px;color:#000;letter-spacing:-0.055px;">03:15</span>
<span class="t" style="left:1227.54px;top:216.00px;font-size:10px;line-height:13px;color:#000;letter-spacing:-0.055px;">03:30</span>
<span class="t" style="left:1272.22px;top:216.00px;font-size:10px;line-height:13px;color:#000;letter-spacing:-0.055px;">03:45</span>
<span class="t" style="left:1316.90px;top:216.00px;font-size:10px;line-height:13px;color:#000;letter-spacing:-0.055px;">04:00</span>
<span class="t" style="left:1361.58px;top:216.00px;font-size:10px;line-height:13px;color:#000;letter-spacing:-0.055px;">04:15</span>
<span class="t" style="left:1406.26px;top:216.00px;font-size:10px;line-height:13px;color:#000;letter-spacing:-0.055px;">04:30</span>
<span class="t" style="left:1450.94px;top:216.00px;font-size:10px;line-height:13px;color:#000;letter-spacing:-0.055px;">04:45</span>
<span class="t" style="left:1495.62px;top:216.00px;font-size:10px;line-height:13px;color:#000;letter-spacing:-0.055px;">05:00</span>
<span class="t" style="left:1540.30px;top:216.00px;font-size:10px;line-height:13px;color:#000;letter-spacing:-0.055px;">05:15</span>
<span class="t" style="left:1584.98px;top:216.00px;font-size:10px;line-height:13px;color:#000;letter-spacing:-0.055px;">05:30</span>
<span class="t" style="left:169.3px;top:126.5px;width:199.76px;text-indent:0;text-align:center;font-size:14.5px;line-height:20px;font-weight:bold;transform:rotate(-90deg);transform-origin:100px 10px;letter-spacing:-0.239px;">Event Flags</span>
<svg width="1680" height="1024" viewBox="0 0 1680 1024"><path d="M342.3 258.36H1643.4M342.3 265.11H1643.4M342.3 271.87H1643.4M342.3 278.62H1643.4M342.3 285.38H1643.4M342.3 292.13H1643.4M342.3 298.88H1643.4M342.3 305.64H1643.4M342.3 312.39H1643.4M342.3 319.15H1643.4M342.3 325.90H1643.4M342.3 332.66H1643.4M342.3 339.41H1643.4M342.3 346.17H1643.4M342.3 352.93H1643.4M342.3 359.68H1643.4M342.3 366.44H1643.4M342.3 373.19H1643.4M342.3 379.94H1643.4" stroke="#fafafa" stroke-width="1" fill="none"/><path d="M342.3 278.62H1643.4M342.3 305.64H1643.4M342.3 332.66H1643.4M342.3 359.68H1643.4" stroke="#f4f4f4" stroke-width="1.6" fill="none"/><path d="M342.30 387.2v9.5M349.53 387.2v5M356.76 387.2v5M363.99 387.2v5M371.21 387.2v5M378.44 387.2v5M385.67 387.2v5M392.90 387.2v5M400.13 387.2v5M407.36 387.2v5M414.58 387.2v9.5M421.81 387.2v5M429.04 387.2v5M436.27 387.2v5M443.50 387.2v5M450.73 387.2v5M457.95 387.2v5M465.18 387.2v5M472.41 387.2v5M479.64 387.2v5M486.87 387.2v9.5M494.10 387.2v5M501.32 387.2v5M508.55 387.2v5M515.78 387.2v5M523.01 387.2v5M530.24 387.2v5M537.47 387.2v5M544.69 387.2v5M551.92 387.2v5M559.15 387.2v9.5M566.38 387.2v5M573.61 387.2v5M580.84 387.2v5M588.06 387.2v5M595.29 387.2v5M602.52 387.2v5M609.75 387.2v5M616.98 387.2v5M624.21 387.2v5M631.43 387.2v9.5M638.66 387.2v5M645.89 387.2v5M653.12 387.2v5M660.35 387.2v5M667.58 387.2v5M674.80 387.2v5M682.03 387.2v5M689.26 387.2v5M696.49 387.2v5M703.72 387.2v9.5M710.95 387.2v5M718.17 387.2v5M725.40 387.2v5M732.63 387.2v5M739.86 387.2v5M747.09 387.2v5M754.32 387.2v5M761.54 387.2v5M768.77 387.2v5M776.00 387.2v9.5M783.23 387.2v5M790.46 387.2v5M797.69 387.2v5M804.91 387.2v5M812.14 387.2v5M819.37 387.2v5M826.60 387.2v5M833.83 387.2v5M841.06 387.2v5M848.28 387.2v9.5M855.51 387.2v5M862.74 387.2v5M869.97 387.2v5M877.20 387.2v5M884.43 387.2v5M891.65 387.2v5M898.88 387.2v5M906.11 387.2v5M913.34 387.2v5M920.57 387.2v9.5M927.80 387.2v5M935.02 387.2v5M942.25 387.2v5M949.48 387.2v5M956.71 387.2v5M963.94 387.2v5M971.17 387.2v5M978.39 387.2v5M985.62 387.2v5M992.85 387.2v9.5M1000.08 387.2v5M1007.31 387.2v5M1014.54 387.2v5M1021.76 387.2v5M1028.99 387.2v5M1036.22 387.2v5M1043.45 387.2v5M1050.68 387.2v5M1057.91 387.2v5M1065.13 387.2v9.5M1072.36 387.2v5M1079.59 387.2v5M1086.82 387.2v5M1094.05 387.2v5M1101.28 387.2v5M1108.50 387.2v5M1115.73 387.2v5M1122.96 387.2v5M1130.19 387.2v5M1137.42 387.2v9.5M1144.65 387.2v5M1151.87 387.2v5M1159.10 387.2v5M1166.33 387.2v5M1173.56 387.2v5M1180.79 387.2v5M1188.02 387.2v5M1195.24 387.2v5M1202.47 387.2v5M1209.70 387.2v9.5M1216.93 387.2v5M1224.16 387.2v5M1231.39 387.2v5M1238.61 387.2v5M1245.84 387.2v5M1253.07 387.2v5M1260.30 387.2v5M1267.53 387.2v5M1274.76 387.2v5M1281.98 387.2v9.5M1289.21 387.2v5M1296.44 387.2v5M1303.67 387.2v5M1310.90 387.2v5M1318.13 387.2v5M1325.35 387.2v5M1332.58 387.2v5M1339.81 387.2v5M1347.04 387.2v5M1354.27 387.2v9.5M1361.50 387.2v5M1368.72 387.2v5M1375.95 387.2v5M1383.18 387.2v5M1390.41 387.2v5M1397.64 387.2v5M1404.87 387.2v5M1412.09 387.2v5M1419.32 387.2v5M1426.55 387.2v9.5M1433.78 387.2v5M1441.01 387.2v5M1448.24 387.2v5M1455.46 387.2v5M1462.69 387.2v5M1469.92 387.2v5M1477.15 387.2v5M1484.38 387.2v5M1491.61 387.2v5M1498.83 387.2v9.5M1506.06 387.2v5M1513.29 387.2v5M1520.52 387.2v5M1527.75 387.2v5M1534.98 387.2v5M1542.20 387.2v5M1549.43 387.2v5M1556.66 387.2v5M1563.89 387.2v5M1571.12 387.2v9.5M1578.35 387.2v5M1585.57 387.2v5M1592.80 387.2v5M1600.03 387.2v5M1607.26 387.2v5M1614.49 387.2v5M1621.72 387.2v5M1628.94 387.2v5M1636.17 387.2v5" stroke="#666" stroke-width="1.5" fill="none"/><path d="M341.4 251.60h-2.2M341.4 258.36h-2.2M341.4 265.11h-2.2M341.4 271.87h-2.2M341.4 278.62h-2.2M341.4 285.38h-2.2M341.4 292.13h-2.2M341.4 298.88h-2.2M341.4 305.64h-2.2M341.4 312.39h-2.2M341.4 319.15h-2.2M341.4 325.90h-2.2M341.4 332.66h-2.2M341.4 339.41h-2.2M341.4 346.17h-2.2M341.4 352.93h-2.2M341.4 359.68h-2.2M341.4 366.44h-2.2M341.4 373.19h-2.2M341.4 379.94h-2.2M341.4 386.70h-2.2M341.4 251.60h-4M341.4 278.62h-4M341.4 305.64h-4M341.4 332.66h-4M341.4 359.68h-4M341.4 386.70h-4" stroke="#666" stroke-width="1.5" fill="none"/><path d="M342.3 446.86H1643.4M342.3 458.12H1643.4M342.3 469.38H1643.4M342.3 480.63H1643.4M342.3 491.89H1643.4M342.3 503.15H1643.4M342.3 514.41H1643.4M342.3 525.67H1643.4M342.3 536.93H1643.4M342.3 548.18H1643.4M342.3 559.44H1643.4" stroke="#fafafa" stroke-width="1" fill="none"/><path d="M342.3 480.63H1643.4M342.3 525.67H1643.4" stroke="#f4f4f4" stroke-width="1.6" fill="none"/><path d="M342.30 571.2v9.5M349.53 571.2v5M356.76 571.2v5M363.99 571.2v5M371.21 571.2v5M378.44 571.2v5M385.67 571.2v5M392.90 571.2v5M400.13 571.2v5M407.36 571.2v5M414.58 571.2v9.5M421.81 571.2v5M429.04 571.2v5M436.27 571.2v5M443.50 571.2v5M450.73 571.2v5M457.95 571.2v5M465.18 571.2v5M472.41 571.2v5M479.64 571.2v5M486.87 571.2v9.5M494.10 571.2v5M501.32 571.2v5M508.55 571.2v5M515.78 571.2v5M523.01 571.2v5M530.24 571.2v5M537.47 571.2v5M544.69 571.2v5M551.92 571.2v5M559.15 571.2v9.5M566.38 571.2v5M573.61 571.2v5M580.84 571.2v5M588.06 571.2v5M595.29 571.2v5M602.52 571.2v5M609.75 571.2v5M616.98 571.2v5M624.21 571.2v5M631.43 571.2v9.5M638.66 571.2v5M645.89 571.2v5M653.12 571.2v5M660.35 571.2v5M667.58 571.2v5M674.80 571.2v5M682.03 571.2v5M689.26 571.2v5M696.49 571.2v5M703.72 571.2v9.5M710.95 571.2v5M718.17 571.2v5M725.40 571.2v5M732.63 571.2v5M739.86 571.2v5M747.09 571.2v5M754.32 571.2v5M761.54 571.2v5M768.77 571.2v5M776.00 571.2v9.5M783.23 571.2v5M790.46 571.2v5M797.69 571.2v5M804.91 571.2v5M812.14 571.2v5M819.37 571.2v5M826.60 571.2v5M833.83 571.2v5M841.06 571.2v5M848.28 571.2v9.5M855.51 571.2v5M862.74 571.2v5M869.97 571.2v5M877.20 571.2v5M884.43 571.2v5M891.65 571.2v5M898.88 571.2v5M906.11 571.2v5M913.34 571.2v5M920.57 571.2v9.5M927.80 571.2v5M935.02 571.2v5M942.25 571.2v5M949.48 571.2v5M956.71 571.2v5M963.94 571.2v5M971.17 571.2v5M978.39 571.2v5M985.62 571.2v5M992.85 571.2v9.5M1000.08 571.2v5M1007.31 571.2v5M1014.54 571.2v5M1021.76 571.2v5M1028.99 571.2v5M1036.22 571.2v5M1043.45 571.2v5M1050.68 571.2v5M1057.91 571.2v5M1065.13 571.2v9.5M1072.36 571.2v5M1079.59 571.2v5M1086.82 571.2v5M1094.05 571.2v5M1101.28 571.2v5M1108.50 571.2v5M1115.73 571.2v5M1122.96 571.2v5M1130.19 571.2v5M1137.42 571.2v9.5M1144.65 571.2v5M1151.87 571.2v5M1159.10 571.2v5M1166.33 571.2v5M1173.56 571.2v5M1180.79 571.2v5M1188.02 571.2v5M1195.24 571.2v5M1202.47 571.2v5M1209.70 571.2v9.5M1216.93 571.2v5M1224.16 571.2v5M1231.39 571.2v5M1238.61 571.2v5M1245.84 571.2v5M1253.07 571.2v5M1260.30 571.2v5M1267.53 571.2v5M1274.76 571.2v5M1281.98 571.2v9.5M1289.21 571.2v5M1296.44 571.2v5M1303.67 571.2v5M1310.90 571.2v5M1318.13 571.2v5M1325.35 571.2v5M1332.58 571.2v5M1339.81 571.2v5M1347.04 571.2v5M1354.27 571.2v9.5M1361.50 571.2v5M1368.72 571.2v5M1375.95 571.2v5M1383.18 571.2v5M1390.41 571.2v5M1397.64 571.2v5M1404.87 571.2v5M1412.09 571.2v5M1419.32 571.2v5M1426.55 571.2v9.5M1433.78 571.2v5M1441.01 571.2v5M1448.24 571.2v5M1455.46 571.2v5M1462.69 571.2v5M1469.92 571.2v5M1477.15 571.2v5M1484.38 571.2v5M1491.61 571.2v5M1498.83 571.2v9.5M1506.06 571.2v5M1513.29 571.2v5M1520.52 571.2v5M1527.75 571.2v5M1534.98 571.2v5M1542.20 571.2v5M1549.43 571.2v5M1556.66 571.2v5M1563.89 571.2v5M1571.12 571.2v9.5M1578.35 571.2v5M1585.57 571.2v5M1592.80 571.2v5M1600.03 571.2v5M1607.26 571.2v5M1614.49 571.2v5M1621.72 571.2v5M1628.94 571.2v5M1636.17 571.2v5" stroke="#666" stroke-width="1.5" fill="none"/><path d="M341.4 435.60h-2.2M341.4 446.86h-2.2M341.4 458.12h-2.2M341.4 469.38h-2.2M341.4 480.63h-2.2M341.4 491.89h-2.2M341.4 503.15h-2.2M341.4 514.41h-2.2M341.4 525.67h-2.2M341.4 536.93h-2.2M341.4 548.18h-2.2M341.4 559.44h-2.2M341.4 570.70h-2.2M341.4 435.60h-4M341.4 480.63h-4M341.4 525.67h-4M341.4 570.70h-4" stroke="#666" stroke-width="1.5" fill="none"/><path d="M342.3 626.36H1643.4M342.3 633.11H1643.4M342.3 639.87H1643.4M342.3 646.62H1643.4M342.3 653.38H1643.4M342.3 660.13H1643.4M342.3 666.88H1643.4M342.3 673.64H1643.4M342.3 680.39H1643.4M342.3 687.15H1643.4M342.3 693.91H1643.4M342.3 700.66H1643.4M342.3 707.42H1643.4M342.3 714.17H1643.4M342.3 720.93H1643.4M342.3 727.68H1643.4M342.3 734.44H1643.4M342.3 741.19H1643.4M342.3 747.95H1643.4" stroke="#fafafa" stroke-width="1" fill="none"/><path d="M342.3 646.62H1643.4M342.3 673.64H1643.4M342.3 700.66H1643.4M342.3 727.68H1643.4" stroke="#f4f4f4" stroke-width="1.6" fill="none"/><path d="M342.30 755.2v9.5M349.53 755.2v5M356.76 755.2v5M363.99 755.2v5M371.21 755.2v5M378.44 755.2v5M385.67 755.2v5M392.90 755.2v5M400.13 755.2v5M407.36 755.2v5M414.58 755.2v9.5M421.81 755.2v5M429.04 755.2v5M436.27 755.2v5M443.50 755.2v5M450.73 755.2v5M457.95 755.2v5M465.18 755.2v5M472.41 755.2v5M479.64 755.2v5M486.87 755.2v9.5M494.10 755.2v5M501.32 755.2v5M508.55 755.2v5M515.78 755.2v5M523.01 755.2v5M530.24 755.2v5M537.47 755.2v5M544.69 755.2v5M551.92 755.2v5M559.15 755.2v9.5M566.38 755.2v5M573.61 755.2v5M580.84 755.2v5M588.06 755.2v5M595.29 755.2v5M602.52 755.2v5M609.75 755.2v5M616.98 755.2v5M624.21 755.2v5M631.43 755.2v9.5M638.66 755.2v5M645.89 755.2v5M653.12 755.2v5M660.35 755.2v5M667.58 755.2v5M674.80 755.2v5M682.03 755.2v5M689.26 755.2v5M696.49 755.2v5M703.72 755.2v9.5M710.95 755.2v5M718.17 755.2v5M725.40 755.2v5M732.63 755.2v5M739.86 755.2v5M747.09 755.2v5M754.32 755.2v5M761.54 755.2v5M768.77 755.2v5M776.00 755.2v9.5M783.23 755.2v5M790.46 755.2v5M797.69 755.2v5M804.91 755.2v5M812.14 755.2v5M819.37 755.2v5M826.60 755.2v5M833.83 755.2v5M841.06 755.2v5M848.28 755.2v9.5M855.51 755.2v5M862.74 755.2v5M869.97 755.2v5M877.20 755.2v5M884.43 755.2v5M891.65 755.2v5M898.88 755.2v5M906.11 755.2v5M913.34 755.2v5M920.57 755.2v9.5M927.80 755.2v5M935.02 755.2v5M942.25 755.2v5M949.48 755.2v5M956.71 755.2v5M963.94 755.2v5M971.17 755.2v5M978.39 755.2v5M985.62 755.2v5M992.85 755.2v9.5M1000.08 755.2v5M1007.31 755.2v5M1014.54 755.2v5M1021.76 755.2v5M1028.99 755.2v5M1036.22 755.2v5M1043.45 755.2v5M1050.68 755.2v5M1057.91 755.2v5M1065.13 755.2v9.5M1072.36 755.2v5M1079.59 755.2v5M1086.82 755.2v5M1094.05 755.2v5M1101.28 755.2v5M1108.50 755.2v5M1115.73 755.2v5M1122.96 755.2v5M1130.19 755.2v5M1137.42 755.2v9.5M1144.65 755.2v5M1151.87 755.2v5M1159.10 755.2v5M1166.33 755.2v5M1173.56 755.2v5M1180.79 755.2v5M1188.02 755.2v5M1195.24 755.2v5M1202.47 755.2v5M1209.70 755.2v9.5M1216.93 755.2v5M1224.16 755.2v5M1231.39 755.2v5M1238.61 755.2v5M1245.84 755.2v5M1253.07 755.2v5M1260.30 755.2v5M1267.53 755.2v5M1274.76 755.2v5M1281.98 755.2v9.5M1289.21 755.2v5M1296.44 755.2v5M1303.67 755.2v5M1310.90 755.2v5M1318.13 755.2v5M1325.35 755.2v5M1332.58 755.2v5M1339.81 755.2v5M1347.04 755.2v5M1354.27 755.2v9.5M1361.50 755.2v5M1368.72 755.2v5M1375.95 755.2v5M1383.18 755.2v5M1390.41 755.2v5M1397.64 755.2v5M1404.87 755.2v5M1412.09 755.2v5M1419.32 755.2v5M1426.55 755.2v9.5M1433.78 755.2v5M1441.01 755.2v5M1448.24 755.2v5M1455.46 755.2v5M1462.69 755.2v5M1469.92 755.2v5M1477.15 755.2v5M1484.38 755.2v5M1491.61 755.2v5M1498.83 755.2v9.5M1506.06 755.2v5M1513.29 755.2v5M1520.52 755.2v5M1527.75 755.2v5M1534.98 755.2v5M1542.20 755.2v5M1549.43 755.2v5M1556.66 755.2v5M1563.89 755.2v5M1571.12 755.2v9.5M1578.35 755.2v5M1585.57 755.2v5M1592.80 755.2v5M1600.03 755.2v5M1607.26 755.2v5M1614.49 755.2v5M1621.72 755.2v5M1628.94 755.2v5M1636.17 755.2v5" stroke="#666" stroke-width="1.5" fill="none"/><path d="M341.4 619.60h-2.2M341.4 626.36h-2.2M341.4 633.11h-2.2M341.4 639.87h-2.2M341.4 646.62h-2.2M341.4 653.38h-2.2M341.4 660.13h-2.2M341.4 666.88h-2.2M341.4 673.64h-2.2M341.4 680.39h-2.2M341.4 687.15h-2.2M341.4 693.91h-2.2M341.4 700.66h-2.2M341.4 707.42h-2.2M341.4 714.17h-2.2M341.4 720.93h-2.2M341.4 727.68h-2.2M341.4 734.44h-2.2M341.4 741.19h-2.2M341.4 747.95h-2.2M341.4 754.70h-2.2M341.4 619.60h-4M341.4 646.62h-4M341.4 673.64h-4M341.4 700.66h-4M341.4 727.68h-4M341.4 754.70h-4" stroke="#666" stroke-width="1.5" fill="none"/><path d="M342.3 837.38H1643.4M342.3 871.15H1643.4M342.3 904.93H1643.4" stroke="#f9f9f9" stroke-width="1.2" fill="none"/><path d="M342.30 939.2v9.5M349.53 939.2v5M356.76 939.2v5M363.99 939.2v5M371.21 939.2v5M378.44 939.2v5M385.67 939.2v5M392.90 939.2v5M400.13 939.2v5M407.36 939.2v5M414.58 939.2v9.5M421.81 939.2v5M429.04 939.2v5M436.27 939.2v5M443.50 939.2v5M450.73 939.2v5M457.95 939.2v5M465.18 939.2v5M472.41 939.2v5M479.64 939.2v5M486.87 939.2v9.5M494.10 939.2v5M501.32 939.2v5M508.55 939.2v5M515.78 939.2v5M523.01 939.2v5M530.24 939.2v5M537.47 939.2v5M544.69 939.2v5M551.92 939.2v5M559.15 939.2v9.5M566.38 939.2v5M573.61 939.2v5M580.84 939.2v5M588.06 939.2v5M595.29 939.2v5M602.52 939.2v5M609.75 939.2v5M616.98 939.2v5M624.21 939.2v5M631.43 939.2v9.5M638.66 939.2v5M645.89 939.2v5M653.12 939.2v5M660.35 939.2v5M667.58 939.2v5M674.80 939.2v5M682.03 939.2v5M689.26 939.2v5M696.49 939.2v5M703.72 939.2v9.5M710.95 939.2v5M718.17 939.2v5M725.40 939.2v5M732.63 939.2v5M739.86 939.2v5M747.09 939.2v5M754.32 939.2v5M761.54 939.2v5M768.77 939.2v5M776.00 939.2v9.5M783.23 939.2v5M790.46 939.2v5M797.69 939.2v5M804.91 939.2v5M812.14 939.2v5M819.37 939.2v5M826.60 939.2v5M833.83 939.2v5M841.06 939.2v5M848.28 939.2v9.5M855.51 939.2v5M862.74 939.2v5M869.97 939.2v5M877.20 939.2v5M884.43 939.2v5M891.65 939.2v5M898.88 939.2v5M906.11 939.2v5M913.34 939.2v5M920.57 939.2v9.5M927.80 939.2v5M935.02 939.2v5M942.25 939.2v5M949.48 939.2v5M956.71 939.2v5M963.94 939.2v5M971.17 939.2v5M978.39 939.2v5M985.62 939.2v5M992.85 939.2v9.5M1000.08 939.2v5M1007.31 939.2v5M1014.54 939.2v5M1021.76 939.2v5M1028.99 939.2v5M1036.22 939.2v5M1043.45 939.2v5M1050.68 939.2v5M1057.91 939.2v5M1065.13 939.2v9.5M1072.36 939.2v5M1079.59 939.2v5M1086.82 939.2v5M1094.05 939.2v5M1101.28 939.2v5M1108.50 939.2v5M1115.73 939.2v5M1122.96 939.2v5M1130.19 939.2v5M1137.42 939.2v9.5M1144.65 939.2v5M1151.87 939.2v5M1159.10 939.2v5M1166.33 939.2v5M1173.56 939.2v5M1180.79 939.2v5M1188.02 939.2v5M1195.24 939.2v5M1202.47 939.2v5M1209.70 939.2v9.5M1216.93 939.2v5M1224.16 939.2v5M1231.39 939.2v5M1238.61 939.2v5M1245.84 939.2v5M1253.07 939.2v5M1260.30 939.2v5M1267.53 939.2v5M1274.76 939.2v5M1281.98 939.2v9.5M1289.21 939.2v5M1296.44 939.2v5M1303.67 939.2v5M1310.90 939.2v5M1318.13 939.2v5M1325.35 939.2v5M1332.58 939.2v5M1339.81 939.2v5M1347.04 939.2v5M1354.27 939.2v9.5M1361.50 939.2v5M1368.72 939.2v5M1375.95 939.2v5M1383.18 939.2v5M1390.41 939.2v5M1397.64 939.2v5M1404.87 939.2v5M1412.09 939.2v5M1419.32 939.2v5M1426.55 939.2v9.5M1433.78 939.2v5M1441.01 939.2v5M1448.24 939.2v5M1455.46 939.2v5M1462.69 939.2v5M1469.92 939.2v5M1477.15 939.2v5M1484.38 939.2v5M1491.61 939.2v5M1498.83 939.2v9.5M1506.06 939.2v5M1513.29 939.2v5M1520.52 939.2v5M1527.75 939.2v5M1534.98 939.2v5M1542.20 939.2v5M1549.43 939.2v5M1556.66 939.2v5M1563.89 939.2v5M1571.12 939.2v9.5M1578.35 939.2v5M1585.57 939.2v5M1592.80 939.2v5M1600.03 939.2v5M1607.26 939.2v5M1614.49 939.2v5M1621.72 939.2v5M1628.94 939.2v5M1636.17 939.2v5" stroke="#666" stroke-width="1.5" fill="none"/><path d="M341.4 803.60h-2.2M341.4 810.36h-2.2M341.4 817.11h-2.2M341.4 823.87h-2.2M341.4 830.62h-2.2M341.4 837.38h-2.2M341.4 844.13h-2.2M341.4 850.88h-2.2M341.4 857.64h-2.2M341.4 864.39h-2.2M341.4 871.15h-2.2M341.4 877.91h-2.2M341.4 884.66h-2.2M341.4 891.42h-2.2M341.4 898.17h-2.2M341.4 904.93h-2.2M341.4 911.68h-2.2M341.4 918.44h-2.2M341.4 925.19h-2.2M341.4 931.95h-2.2M341.4 938.70h-2.2M341.4 803.60h-4M341.4 830.62h-4M341.4 857.64h-4M341.4 884.66h-4M341.4 911.68h-4M341.4 938.70h-4" stroke="#666" stroke-width="1.5" fill="none"/><path d="M342.5 325.83 L343.9 324.68 L345.27 323.93 L346.67 322.5 L348.36 321.09 L350.0 319.67 L352.5 320.83 L353.59 318.51 L354.67 316.67 L355.03 315.1 L355.19 313.03 L355.6 311.36 L355.7 310.15 L356.21 308.7 L356.41 306.78 L356.67 305.0 L357.39 302.96 L358.23 301.47 L359.17 299.67 L360.77 299.76 L362.5 300.33 L363.33 301.47 L364.17 303.33 L364.38 304.95 L364.46 306.68 L364.6 308.33 L364.63 309.96 L364.93 312.04 L364.99 313.59 L365.01 314.86 L365.1 316.5 L365.33 318.33 L365.5 320.27 L365.69 322.07 L365.99 323.89 L366.03 324.9 L366.28 327.33 L366.45 329.13 L366.67 330.5 L367.7 328.68 L368.67 327.5 L370.33 329.67 L371.36 328.55 L372.5 327.0 L375.0 327.0 L376.21 325.69 L377.5 325.0 L379.17 322.5 L380.48 321.6 L381.67 320.0 L381.89 318.04 L382.14 316.36 L382.45 315.22 L382.8 313.38 L383.15 311.43 L383.42 309.72 L383.67 308.33 L384.25 306.37 L384.81 304.78 L385.54 303.69 L386.16 301.52 L386.67 300.0 L387.27 298.2 L387.95 297.1 L388.66 294.95 L389.17 293.67 L390.83 295.0 L391.05 296.45 L391.35 298.54 L391.56 299.85 L391.96 301.36 L392.25 303.14 L392.5 305.0 L392.58 306.57 L392.68 308.68 L392.86 310.06 L392.79 311.43 L393.04 313.64 L392.98 314.81 L393.25 316.85 L393.35 318.1 L393.33 320.0 L393.42 321.89 L393.36 323.14 L393.63 324.46 L393.64 326.21 L393.73 327.83 L393.67 329.69 L393.84 330.97 L393.78 332.49 L394.0 334.47 L393.92 336.11 L393.97 337.94 L394.05 338.86 L394.17 340.83 L395.73 339.71 L397.5 338.67 L398.3 336.64 L399.08 335.16 L400.0 333.33 L401.34 331.4 L402.5 329.67 L403.37 328.12 L404.17 325.83 L405.02 324.59 L405.73 322.78 L406.67 321.67 L409.17 321.33 L411.67 320.33 L414.17 319.67 L416.33 322.0 L417.85 320.63 L419.17 320.0 L420.53 318.65 L421.67 317.0 L423.33 315.0 L423.78 312.97 L424.22 311.65 L424.7 309.86 L425.0 308.33 L425.68 306.28 L426.43 305.05 L427.05 303.31 L427.76 301.62 L428.33 299.67 L430.83 298.67 L432.5 298.0 L432.88 299.64 L433.25 301.8 L433.57 303.19 L433.83 305.0 L434.01 306.94 L434.14 308.43 L434.36 310.06 L434.53 311.35 L434.76 313.71 L434.81 315.18 L435.0 316.67 L435.11 318.52 L435.27 319.96 L435.34 321.35 L435.39 322.98 L435.4 324.99 L435.55 326.82 L435.75 328.42 L435.62 329.82 L435.83 331.67 L436.15 333.19 L436.31 334.78 L436.67 336.67 L438.12 336.14 L439.5 335.0 L440.32 333.29 L440.99 331.54 L441.67 330.0 L442.32 328.11 L443.0 326.67 L445.0 327.5 L446.35 326.32 L447.5 324.67 L449.17 322.0 L451.33 322.5 L452.72 321.54 L454.17 320.0 L455.38 318.4 L456.67 316.67 L457.67 314.31 L458.67 312.5 L459.17 310.88 L459.61 308.91 L459.84 306.71 L460.33 305.0 L461.03 303.38 L461.81 301.62 L462.58 300.35 L463.33 298.67 L465.33 298.0 L467.5 300.0 L467.82 301.53 L467.96 303.7 L468.09 304.67 L468.33 306.95 L468.67 308.33 L468.85 310.16 L469.07 311.52 L469.08 312.97 L469.22 314.97 L469.44 316.92 L469.56 318.06 L469.82 320.1 L470.0 321.67 L470.16 323.43 L470.35 325.24 L470.28 326.81 L470.4 328.31 L470.59 329.63 L470.63 331.83 L470.83 333.33 L472.5 335.83 L474.67 335.83 L475.63 334.41 L476.67 333.33 L477.78 331.7 L478.95 329.86 L480.0 328.0 L480.9 326.54 L481.57 325.56 L482.55 324.2 L483.33 322.5 L485.0 320.83 L486.67 320.83 L486.87 318.67 L487.18 317.18 L487.31 315.11 L487.5 313.33 L487.81 311.95 L487.97 310.34 L488.14 308.45 L488.53 306.84 L488.75 305.11 L489.03 303.12 L489.17 301.67 L489.7 300.37 L490.07 298.36 L490.51 296.53 L490.83 295.0 L493.33 294.17 L495.83 295.83 L496.03 297.93 L496.28 299.18 L496.6 301.37 L496.65 303.16 L497.0 305.0 L496.98 306.9 L497.09 308.56 L497.32 309.87 L497.25 311.39 L497.47 313.35 L497.55 315.26 L497.58 317.01 L497.57 318.67 L497.76 319.79 L497.89 321.51 L497.92 323.44 L498.0 325.0 L498.09 327.02 L498.12 328.37 L498.32 330.54 L498.38 331.81 L498.38 334.15 L498.37 335.61 L498.52 337.34 L498.48 339.15 L498.67 340.83 L499.75 339.52 L500.83 337.5 L502.57 336.17 L504.17 335.0 L505.0 333.38 L505.83 331.67 L506.77 330.36 L507.89 328.78 L509.06 327.64 L510.0 325.83 L510.83 323.71 L511.65 321.66 L512.5 320.0 L512.8 318.57 L512.87 316.65 L513.15 314.77 L513.25 313.66 L513.43 311.88 L513.69 309.77 L513.92 308.48 L514.17 306.67 L514.7 304.89 L515.23 303.03 L515.67 301.38 L516.1 299.81 L516.67 298.33 L517.65 296.85 L518.67 295.33 L519.73 297.16 L520.83 299.17 L521.47 300.86 L522.31 302.28 L523.0 304.17 L523.13 306.06 L523.26 308.01 L523.29 309.8 L523.55 311.5 L523.55 313.4 L523.81 314.74 L523.83 316.67 L524.04 318.06 L523.92 320.17 L524.15 321.28 L524.09 322.9 L524.26 324.93 L524.28 326.5 L524.5 327.81 L524.48 329.12 L524.74 331.23 L524.64 333.05 L524.88 334.3 L524.95 335.9 L525.0 337.5 L527.5 337.5 L528.44 335.81 L529.47 334.29 L530.63 333.17 L531.67 331.67 L532.63 330.47 L533.68 328.93 L534.91 328.18 L535.83 326.67 L536.85 325.6 L538.17 323.56 L539.17 322.5 L539.57 320.64 L539.83 318.7 L540.15 317.01 L540.38 315.24 L540.83 313.33 L541.19 311.82 L541.38 309.75 L541.64 308.51 L541.86 306.43 L542.11 305.01 L542.5 303.33 L543.41 301.96 L544.25 300.15 L545.0 298.33 L546.64 298.01 L548.33 297.5 L550.83 297.0 L551.0 298.68 L551.24 300.57 L551.43 301.62 L551.57 303.59 L551.67 305.0 L551.76 306.91 L551.98 308.63 L552.07 310.15 L552.09 311.87 L552.12 313.5 L552.33 314.88 L552.41 316.29 L552.59 318.44 L552.77 319.8 L552.74 321.79 L552.91 323.45 L553.0 325.0 L553.08 326.8 L553.24 328.92 L553.37 330.47 L553.3 332.45 L553.58 333.94 L553.6 335.44 L553.65 337.06 L553.83 339.17 L556.67 338.33 L559.17 337.5 L559.91 335.91 L560.93 334.31 L561.67 333.04 L562.51 331.86 L563.33 330.0 L564.2 328.88 L564.9 327.24 L565.89 325.57 L566.77 323.65 L567.5 322.5 L569.16 321.83 L570.83 321.67 L571.07 319.75 L571.2 318.42 L571.53 317.01 L571.81 315.02 L571.97 313.23 L572.28 311.79 L572.5 310.0 L572.97 308.17 L573.22 306.51 L573.64 304.81 L574.23 303.07 L574.68 301.58 L575.0 300.0 L575.56 298.69 L576.44 297.37 L577.1 295.18 L577.66 293.95 L578.33 292.5 L580.33 290.5 L581.67 293.33 L581.77 295.36 L582.11 296.68 L582.16 298.5 L582.41 300.37 L582.5 301.67 L582.48 303.42 L582.64 305.1 L582.62 306.44 L582.71 308.36 L582.92 309.96 L582.9 311.63 L583.01 313.4 L583.11 315.21 L583.29 317.05 L583.19 318.51 L583.33 320.0 L583.48 321.31 L583.48 323.43 L583.46 324.71 L583.59 326.57 L583.66 328.11 L583.62 329.84 L583.87 331.06 L583.9 333.17 L583.76 334.11 L583.91 335.9 L583.89 337.77 L583.95 339.32 L584.15 340.58 L584.17 342.5 L585.45 340.87 L586.67 339.17 L588.33 338.24 L590.0 337.5 L590.8 335.78 L591.75 334.69 L592.41 332.68 L593.37 331.73 L594.17 330.0 L595.21 328.54 L596.33 326.61 L597.5 325.0 L600.0 323.33 L601.47 322.32 L603.0 320.83 L603.41 319.07 L603.6 316.95 L603.98 315.39 L604.17 313.33 L604.64 311.61 L605.26 309.69 L605.57 308.01 L606.17 306.71 L606.67 305.0 L607.12 303.47 L607.57 301.88 L608.21 299.78 L608.62 298.02 L609.17 296.67 L611.33 295.33 L611.93 297.06 L612.36 298.28 L613.0 300.0 L613.25 301.56 L613.3 303.23 L613.6 305.16 L613.89 306.98 L613.96 308.65 L614.17 310.0 L614.23 311.9 L614.35 313.19 L614.58 315.33 L614.55 316.47 L614.66 318.23 L614.77 319.92 L614.91 321.43 L615.0 323.33 L615.13 325.22 L615.25 326.92 L615.42 328.09 L615.42 330.29 L615.6 331.3 L615.73 333.37 L615.83 335.0 L617.5 336.67 L620.0 336.33 L620.0 335.83 L620.87 334.24 L621.56 332.17 L622.5 330.0 L623.4 328.48 L624.07 326.57 L625.0 325.33 L626.76 324.35 L628.33 323.0 L629.86 321.02 L631.33 319.67 L631.67 317.78 L631.84 316.54 L632.25 314.6 L632.54 313.21 L632.72 311.49 L633.09 310.31 L633.33 308.33 L633.84 306.72 L634.38 305.28 L634.81 303.82 L635.37 302.14 L635.9 300.55 L636.33 298.67 L637.84 298.09 L639.17 297.0 L640.83 299.17 L641.3 301.18 L641.75 302.52 L642.11 304.4 L642.48 305.77 L643.0 307.5 L643.22 309.45 L643.13 310.95 L643.29 312.59 L643.53 314.43 L643.47 316.02 L643.66 317.83 L643.65 320.11 L643.83 321.67 L643.9 323.0 L644.08 325.07 L643.97 326.32 L644.07 328.1 L644.26 329.8 L644.22 331.74 L644.31 333.1 L644.5 334.75 L644.53 336.52 L644.59 338.57 L644.67 340.0 L645.76 338.57 L646.67 337.5 L647.47 336.15 L648.45 334.2 L649.17 332.5 L650.35 330.82 L651.67 329.17 L652.61 327.41 L653.33 326.33 L654.55 325.48 L655.83 324.17 L657.08 322.52 L658.33 320.83 L658.69 318.87 L658.74 317.38 L659.04 315.1 L659.36 313.59 L659.55 312.06 L659.68 309.86 L660.0 308.33 L660.36 306.53 L660.84 305.28 L661.37 303.44 L661.67 301.67 L662.43 299.91 L663.23 298.23 L664.0 296.54 L664.67 295.33 L666.67 294.17 L667.83 296.51 L668.83 298.33 L668.91 299.68 L669.01 301.83 L669.24 303.31 L669.41 305.34 L669.48 306.93 L669.67 308.33 L669.73 310.22 L669.74 311.98 L669.85 313.58 L670.01 315.03 L670.16 316.4 L670.12 318.19 L670.2 319.68 L670.39 321.64 L670.46 323.23 L670.5 325.0 L670.58 326.37 L670.82 328.3 L670.85 330.25 L670.89 331.29 L670.96 333.49 L671.11 335.05 L671.34 336.29 L671.33 338.33 L673.33 338.67 L675.83 337.5 L676.59 336.34 L677.45 334.81 L678.33 333.33 L679.17 331.57 L679.96 329.84 L680.83 328.33 L681.98 326.58 L682.98 324.81 L684.17 323.33 L685.38 322.26 L686.67 320.83 L689.17 319.17 L689.74 317.56 L690.24 315.45 L690.83 313.33 L690.97 311.91 L691.2 309.73 L691.58 308.47 L691.74 306.42 L692.0 305.0 L693.11 304.01 L694.17 302.5 L696.67 303.33 L697.85 304.27 L699.17 305.83 L700.83 308.33 L700.97 309.74 L701.2 311.6 L701.51 313.65 L701.8 315.01 L702.0 316.67 L702.24 318.54 L702.29 319.92 L702.38 321.6 L702.71 323.26 L702.9 325.37 L703.0 326.67 L703.86 328.87 L704.67 330.83 L706.46 330.46 L708.33 330.83 L710.04 329.05 L711.67 327.5 L712.75 325.81 L713.96 324.73 L715.0 323.33 L716.69 321.91 L718.33 320.0 L720.83 321.33 L721.73 319.16 L722.5 317.5 L722.71 316.0 L722.89 313.78 L723.14 311.81 L723.28 310.65 L723.56 308.64 L723.67 306.67 L724.01 304.82 L724.07 303.53 L724.32 301.49 L724.67 300.25 L724.96 298.44 L725.08 296.84 L725.33 295.33 L726.53 296.54 L727.5 298.33 L729.17 297.5 L729.56 295.27 L729.76 293.62 L729.98 291.67 L730.33 289.67 L732.0 289.67 L732.45 291.73 L732.69 293.41 L733.08 294.63 L733.33 296.67 L733.84 298.17 L734.18 299.8 L734.51 301.92 L735.0 303.33 L734.98 305.03 L735.09 306.31 L735.35 308.7 L735.29 310.12 L735.47 311.8 L735.52 313.24 L735.46 315.23 L735.66 316.44 L735.72 318.06 L735.83 320.0 L735.85 321.72 L735.96 323.35 L736.07 325.05 L736.09 326.77 L736.21 328.46 L736.41 330.35 L736.46 331.64 L736.62 333.43 L736.67 335.0 L737.15 336.86 L737.5 338.33 L740.0 337.5 L741.78 335.82 L743.33 334.17 L744.53 333.04 L745.54 331.32 L746.67 330.0 L747.88 328.49 L748.9 326.91 L750.0 325.33 L751.76 323.86 L753.33 322.5 L754.34 320.97 L755.65 319.89 L756.67 318.33 L757.11 316.84 L757.46 315.19 L757.82 313.4 L758.32 311.38 L758.73 310.0 L759.17 308.33 L759.65 306.16 L759.97 304.69 L760.44 302.69 L760.79 300.8 L761.33 299.17 L761.94 297.82 L762.42 295.96 L762.9 294.11 L763.33 292.5 L765.83 292.0 L766.31 293.37 L766.76 295.22 L767.15 296.44 L767.5 298.33 L767.64 299.71 L767.64 302.01 L767.84 303.14 L767.92 304.86 L768.23 306.96 L768.25 308.25 L768.3 310.06 L768.64 311.31 L768.67 313.33 L768.75 314.85 L768.95 316.99 L768.85 318.31 L769.1 319.84 L769.01 321.97 L769.13 323.59 L769.17 324.98 L769.45 326.95 L769.45 328.11 L769.5 330.0 L769.69 331.6 L769.61 333.33 L769.76 335.67 L769.99 337.64 L770.0 339.17 L772.5 338.0 L774.08 337.08 L775.83 335.83 L776.77 334.59 L777.4 333.01 L778.33 331.67 L779.12 329.79 L779.92 328.5 L780.83 326.67 L782.02 325.18 L783.33 324.17 L785.07 323.46 L786.67 322.5 L787.96 320.74 L789.17 319.17 L791.67 320.0 L791.93 318.63 L792.1 316.46 L792.42 315.32 L792.65 313.16 L792.97 311.35 L793.1 309.95 L793.33 308.33 L793.64 306.69 L794.11 305.08 L794.66 303.15 L795.0 301.67 L796.2 300.11 L797.5 299.17 L799.1 299.11 L800.83 298.67 L801.68 300.0 L802.5 301.67 L802.76 303.1 L802.72 305.37 L803.06 306.64 L803.27 308.25 L803.26 310.0 L803.54 311.71 L803.67 313.33 L803.82 314.89 L803.9 316.88 L804.09 318.33 L804.12 320.14 L804.15 322.01 L804.26 323.54 L804.38 325.08 L804.62 326.62 L804.67 328.33 L804.9 330.22 L805.0 331.46 L805.18 333.12 L805.33 335.0 L806.3 333.75 L807.5 332.5 L808.66 330.91 L809.81 329.22 L810.83 327.5 L813.33 325.83 L815.83 325.83 L816.58 324.2 L817.5 322.69 L818.33 321.67 L818.87 319.95 L819.51 318.16 L820.0 316.67 L820.31 314.68 L820.43 313.39 L820.56 311.89 L820.79 309.73 L821.0 307.98 L821.26 306.76 L821.48 304.82 L821.67 303.33 L822.37 301.35 L822.86 299.75 L823.59 298.08 L824.17 296.67 L824.74 295.25 L825.15 293.0 L825.6 291.56 L826.06 290.36 L826.67 288.33 L826.83 286.66 L826.78 285.37 L827.02 283.3 L826.99 281.31 L827.07 280.29 L827.2 278.25 L827.25 276.61 L827.56 274.64 L827.6 273.53 L827.58 271.46 L827.67 270.04 L827.83 268.33 L829.67 265.83 L830.33 267.75 L830.74 269.62 L831.33 271.67 L831.49 273.7 L831.57 274.65 L831.61 276.78 L831.9 278.22 L832.0 280.28 L832.1 281.96 L832.32 283.26 L832.44 284.91 L832.5 286.67 L832.52 288.12 L832.62 289.76 L832.58 291.41 L832.7 293.12 L832.75 294.86 L832.85 297.04 L832.79 298.61 L832.81 299.91 L832.93 301.81 L832.9 303.16 L833.01 304.76 L833.22 306.58 L833.12 308.49 L833.14 309.89 L833.24 312.0 L833.33 313.33 L833.46 315.2 L833.37 316.97 L833.53 318.2 L833.73 319.68 L833.78 321.53 L833.68 323.35 L833.8 324.92 L833.86 326.32 L833.9 328.41 L834.08 329.86 L834.17 331.67 L835.83 330.0 L836.3 328.09 L836.89 326.27 L837.5 324.17 L838.1 326.01 L838.54 327.24 L839.17 329.17 L840.83 326.67 L841.09 324.84 L841.22 323.26 L841.39 321.95 L841.63 319.84 L841.76 318.12 L842.11 316.3 L842.37 315.05 L842.5 313.33 L842.76 312.03 L843.23 310.13 L843.48 308.12 L843.86 306.79 L844.0 305.28 L844.28 303.43 L844.66 301.61 L845.0 300.0 L845.16 298.0 L845.38 296.54 L845.49 294.83 L845.75 293.26 L845.99 291.41 L846.04 289.8 L846.33 288.33 L846.53 286.54 L846.8 284.73 L847.0 283.33 L847.18 285.15 L847.22 286.82 L847.47 288.25 L847.64 289.66 L847.83 291.32 L848.0 293.33 L848.19 295.06 L848.33 296.53 L848.55 297.97 L848.8 300.29 L849.02 301.48 L849.17 303.33 L849.99 301.01 L850.83 299.17 L851.04 301.03 L851.06 302.61 L851.21 304.82 L851.28 306.35 L851.33 307.95 L851.54 309.62 L851.54 311.85 L851.67 313.33 L851.62 315.31 L851.8 316.39 L851.82 318.19 L851.84 320.36 L851.92 321.43 L851.98 323.47 L852.12 324.62 L852.17 326.67 L855.0 325.83 L857.02 325.5 L859.17 325.33 L861.67 325.0 L861.87 323.33 L862.03 321.7 L862.24 320.04 L862.33 318.33 L862.46 320.35 L862.76 321.55 L862.88 323.19 L863.0 325.0 L863.13 326.82 L863.24 328.69 L863.28 329.74 L863.35 331.66 L863.36 333.24 L863.51 335.19 L863.52 336.47 L863.59 338.2 L863.66 340.01 L863.83 341.67 L863.89 343.45 L864.21 345.59 L864.33 348.0 L865.1 345.87 L865.89 344.54 L866.67 342.5 L869.17 341.67 L870.92 341.83 L872.5 342.5 L873.23 341.39 L874.17 339.53 L875.0 338.33 L875.81 337.17 L876.61 335.72 L877.5 334.17 L880.0 333.0 L882.5 334.17 L883.71 333.08 L885.0 331.67 L887.5 330.83 L888.67 329.04 L889.8 327.76 L890.83 325.83 L891.64 324.21 L892.53 322.65 L893.33 320.83 L895.83 321.67 L896.46 319.97 L896.91 317.49 L897.5 315.83 L900.0 314.17 L900.0 311.67 L900.35 313.88 L900.83 315.83 L900.95 317.49 L901.4 319.7 L901.44 321.89 L901.75 323.57 L902.0 325.33 L903.67 323.33 L904.31 321.6 L905.0 319.67 L907.5 318.33 L908.45 316.58 L909.17 314.17 L909.77 312.16 L910.17 310.55 L910.83 309.17 L911.72 310.92 L912.5 313.0 L915.0 311.67 L916.16 313.3 L917.5 314.17 L918.47 315.29 L919.67 316.67 L920.67 315.45 L921.67 314.17 L924.17 313.67 L924.75 315.16 L925.5 317.06 L926.02 318.25 L926.67 320.0 L927.98 318.84 L929.17 317.5 L931.67 318.67 L932.89 320.7 L934.17 322.0 L935.43 320.15 L936.67 318.0 L938.25 317.56 L940.0 316.67 L941.0 315.31 L941.32 316.99 L941.83 319.17 L942.67 317.3 L943.5 319.31 L944.33 317.41 L945.17 319.29 L945.53 317.53 L946.0 315.11 L946.83 317.79 L947.16 316.0 L947.67 314.22 L947.97 315.92 L948.5 317.89 L949.33 315.62 L950.17 318.61 L951.0 316.79 L951.33 318.73 L951.83 320.57 L952.2 318.62 L952.67 316.47 L953.5 319.46 L953.91 317.19 L954.33 315.33 L955.17 318.14 L956.0 315.14 L956.83 317.67 L957.67 314.62 L958.03 316.65 L958.5 318.89 L959.33 315.92 L959.65 317.27 L960.17 319.3 L961.0 316.67 L961.37 318.77 L961.83 320.28 L962.17 317.76 L962.67 315.89 L963.5 318.19 L964.03 316.22 L964.33 314.27 L965.17 317.0 L966.0 314.66 L966.5 316.19 L966.83 318.17 L967.67 315.7 L968.06 317.5 L968.5 319.32 L969.33 316.98 L970.17 320.06 L970.56 318.39 L971.0 316.26 L971.43 317.5 L971.83 319.41 L972.28 317.29 L972.67 314.93 L973.5 317.38 L974.33 314.56 L974.86 316.35 L975.17 318.48 L976.0 315.81 L976.83 318.81 L977.67 317.09 L978.2 318.97 L978.5 320.3 L979.0 318.25 L979.33 316.28 L980.17 318.64 L980.51 317.14 L981.0 315.29 L981.83 317.29 L982.67 314.84 L982.92 316.65 L983.33 319.17 L984.23 317.63 L985.33 316.67 L985.84 314.9 L986.23 313.19 L986.67 311.67 L987.02 309.63 L987.38 308.68 L987.99 306.69 L988.33 305.0 L989.22 303.28 L990.07 301.04 L990.83 299.17 L991.31 297.33 L991.67 295.0 L993.33 295.83 L993.65 294.12 L994.17 291.67 L995.33 292.5 L995.47 294.65 L995.6 296.27 L995.72 298.23 L995.93 299.78 L996.13 301.44 L996.33 303.33 L996.48 305.12 L996.52 306.56 L996.51 308.22 L996.59 310.31 L996.67 311.36 L996.72 313.52 L996.88 315.19 L996.86 316.81 L996.93 318.04 L997.08 319.89 L997.17 321.67 L997.26 323.06 L997.31 325.11 L997.56 326.97 L997.63 328.48 L997.69 330.33 L997.84 331.93 L997.93 333.93 L997.89 335.53 L998.0 337.5 L1000.0 335.83 L1000.76 334.53 L1001.71 332.74 L1002.45 331.8 L1003.33 330.0 L1004.41 328.09 L1005.47 327.04 L1006.67 325.0 L1007.89 323.44 L1009.17 321.67 L1010.77 320.94 L1012.5 320.0 L1012.79 318.42 L1012.92 316.94 L1013.1 315.0 L1013.36 313.04 L1013.46 311.81 L1013.67 310.0 L1013.84 308.46 L1013.97 306.58 L1014.24 305.08 L1014.3 303.34 L1014.58 301.76 L1014.8 300.07 L1014.88 298.66 L1015.26 296.64 L1015.33 295.0 L1015.83 293.51 L1016.53 291.84 L1017.05 289.92 L1017.5 288.33 L1018.45 286.66 L1019.1 285.55 L1020.0 284.17 L1022.5 285.33 L1022.77 287.19 L1023.05 288.86 L1023.2 290.36 L1023.33 292.11 L1023.67 293.33 L1023.78 295.28 L1023.85 296.47 L1023.84 298.3 L1023.82 300.27 L1023.98 301.5 L1024.01 303.01 L1024.05 305.21 L1024.18 306.47 L1024.23 308.6 L1024.32 310.03 L1024.19 311.89 L1024.33 313.33 L1024.29 314.89 L1024.4 316.31 L1024.58 318.61 L1024.48 319.71 L1024.69 321.58 L1024.76 323.42 L1024.84 324.67 L1024.81 326.44 L1024.89 328.62 L1024.93 329.77 L1024.83 331.61 L1025.0 333.33 L1025.0 334.99 L1025.04 337.0 L1025.19 338.77 L1025.1 340.23 L1025.23 342.41 L1025.19 343.76 L1025.33 345.83 L1026.44 344.5 L1027.5 342.5 L1029.09 341.81 L1030.83 341.33 L1032.13 340.21 L1033.33 338.33 L1034.13 336.57 L1034.97 334.3 L1035.83 332.5 L1036.97 330.56 L1038.13 329.11 L1039.17 327.5 L1040.27 325.76 L1041.5 324.17 L1042.5 322.5 L1042.7 320.61 L1042.81 318.76 L1043.03 317.02 L1043.17 315.25 L1043.22 313.78 L1043.35 312.2 L1043.55 310.29 L1043.67 308.33 L1043.77 306.62 L1044.03 304.94 L1044.4 303.29 L1044.55 301.51 L1044.65 300.13 L1044.83 298.27 L1045.06 296.97 L1045.33 295.0 L1045.73 293.11 L1046.28 291.58 L1046.64 289.57 L1047.16 287.36 L1047.5 285.83 L1048.72 284.44 L1050.0 283.67 L1052.0 285.83 L1052.3 287.61 L1052.46 289.71 L1052.86 291.76 L1053.0 293.33 L1053.11 294.63 L1053.12 296.64 L1053.18 298.3 L1053.32 300.13 L1053.49 302.02 L1053.42 303.7 L1053.56 305.25 L1053.71 306.82 L1053.67 308.33 L1053.72 309.67 L1053.82 311.59 L1053.95 313.12 L1053.86 314.78 L1053.92 316.39 L1053.9 318.51 L1054.09 319.74 L1054.17 321.76 L1054.24 323.14 L1054.29 325.17 L1054.27 326.37 L1054.33 328.33 L1054.48 329.71 L1054.56 332.17 L1054.5 333.22 L1054.61 335.36 L1054.73 336.78 L1054.73 338.68 L1054.82 340.29 L1054.77 342.05 L1054.88 344.09 L1055.0 345.83 L1056.19 344.38 L1057.5 342.5 L1058.78 341.6 L1060.27 340.62 L1061.67 340.0 L1062.7 338.59 L1063.66 337.35 L1064.71 335.89 L1065.83 334.17 L1066.88 332.86 L1067.94 330.76 L1069.07 329.44 L1070.0 327.5 L1071.27 326.04 L1072.86 324.46 L1074.17 323.33 L1074.41 321.84 L1074.56 319.74 L1074.66 317.97 L1075.06 316.51 L1075.22 315.11 L1075.33 313.33 L1075.52 311.32 L1075.69 309.68 L1076.06 308.04 L1076.16 306.53 L1076.47 305.12 L1076.6 303.67 L1076.89 301.67 L1077.0 300.0 L1077.49 298.25 L1078.03 296.85 L1078.61 294.9 L1079.17 293.33 L1081.67 292.0 L1083.33 294.67 L1083.44 296.37 L1083.6 298.05 L1083.84 299.47 L1083.91 301.19 L1084.02 303.28 L1084.09 304.74 L1084.33 306.67 L1084.38 308.24 L1084.45 309.99 L1084.6 311.86 L1084.67 312.96 L1084.67 315.36 L1084.99 316.74 L1084.99 318.23 L1085.01 319.9 L1085.17 321.75 L1085.24 323.19 L1085.33 325.0 L1085.47 326.64 L1085.38 327.92 L1085.5 329.7 L1085.61 331.74 L1085.68 333.42 L1085.82 334.62 L1085.97 336.09 L1085.88 338.29 L1086.0 339.67 L1088.33 338.0 L1090.08 336.78 L1091.67 335.83 L1092.74 334.8 L1093.81 332.99 L1094.82 331.74 L1095.83 330.83 L1096.98 329.62 L1097.8 328.44 L1099.02 327.41 L1100.0 325.83 L1101.27 324.95 L1102.76 324.12 L1104.17 323.0 L1105.56 322.14 L1106.62 321.32 L1108.0 320.0 L1109.17 320.83 L1109.39 319.21 L1109.6 317.36 L1109.85 315.29 L1110.05 313.21 L1110.33 311.67 L1111.31 309.76 L1112.5 307.5 L1113.14 305.54 L1113.62 304.29 L1114.17 302.5 L1116.67 301.33 L1119.17 302.0 L1119.31 303.31 L1119.74 305.06 L1119.97 306.85 L1120.08 308.18 L1120.33 310.0 L1120.52 311.69 L1120.63 313.05 L1120.53 314.98 L1120.72 316.61 L1120.96 318.46 L1121.01 319.99 L1121.13 321.58 L1121.17 323.33 L1121.35 324.7 L1121.43 326.41 L1121.49 328.11 L1121.61 329.74 L1121.77 331.74 L1121.9 333.25 L1122.0 335.0 L1123.47 334.01 L1125.0 332.5 L1126.11 331.17 L1127.18 330.09 L1128.33 328.33 L1129.94 326.98 L1131.67 325.33 L1132.84 323.93 L1133.83 322.95 L1135.0 321.67 L1136.74 321.34 L1138.33 321.67 L1139.88 320.58 L1141.33 319.67 L1141.86 318.03 L1142.44 316.55 L1142.82 315.23 L1143.33 313.33 L1144.1 311.65 L1144.9 310.19 L1145.83 308.33 L1147.0 306.1 L1148.0 304.17 L1150.0 302.5 L1150.88 304.23 L1151.67 306.67 L1151.85 308.39 L1151.92 309.87 L1152.23 312.01 L1152.24 313.57 L1152.43 315.21 L1152.67 316.44 L1152.83 318.33 L1152.88 320.03 L1153.13 321.75 L1153.35 323.47 L1153.36 324.92 L1153.58 326.73 L1153.67 328.0 L1156.67 327.0 L1158.42 325.68 L1160.0 324.67 L1161.61 323.76 L1163.33 322.5 L1164.88 322.06 L1166.67 322.0 L1168.28 320.86 L1170.0 319.67 L1172.5 318.0 L1174.17 320.0 L1174.74 318.18 L1175.42 316.38 L1175.99 314.82 L1176.67 313.33 L1177.34 311.49 L1177.92 310.28 L1178.67 308.33 L1180.0 306.67 L1180.0 307.5 L1181.09 306.11 L1182.0 304.17 L1183.67 303.33 L1184.12 305.08 L1184.56 306.84 L1185.0 308.33 L1185.27 310.12 L1185.27 311.87 L1185.6 312.99 L1185.73 314.9 L1185.82 316.46 L1186.05 318.24 L1186.17 320.34 L1186.33 321.67 L1186.63 323.32 L1187.11 324.67 L1187.44 326.17 L1187.56 328.19 L1188.0 329.67 L1190.83 328.67 L1192.4 327.81 L1194.17 326.33 L1195.74 324.88 L1197.5 323.33 L1199.12 322.04 L1200.83 320.0 L1203.33 320.83 L1205.0 318.33 L1205.16 316.95 L1205.43 315.12 L1205.82 312.97 L1206.11 312.03 L1206.33 310.0 L1207.4 308.19 L1208.33 305.83 L1209.06 304.46 L1209.92 303.08 L1210.83 301.67 L1212.05 300.69 L1213.33 299.67 L1215.83 300.0 L1218.0 300.83 L1218.05 302.61 L1218.22 304.56 L1218.25 306.18 L1218.49 307.96 L1218.61 310.12 L1218.66 311.27 L1218.83 313.33 L1218.95 314.87 L1219.1 317.0 L1219.16 318.67 L1219.24 320.27 L1219.21 321.3 L1219.33 323.4 L1219.39 325.09 L1219.34 327.0 L1219.63 328.35 L1219.5 329.65 L1219.67 331.67 L1220.17 333.5 L1220.33 334.41 L1220.83 336.33 L1223.67 336.67 L1225.22 335.42 L1226.67 333.67 L1227.8 331.91 L1228.96 330.31 L1230.0 328.33 L1230.73 326.56 L1231.78 325.78 L1232.5 324.17 L1233.03 322.48 L1233.58 320.15 L1234.17 318.33 L1234.44 316.3 L1234.61 314.82 L1234.75 313.35 L1234.99 311.8 L1235.3 309.8 L1235.33 308.09 L1235.62 306.48 L1235.83 305.0 L1236.21 303.55 L1236.7 301.47 L1237.09 299.82 L1237.5 298.33 L1238.84 296.31 L1240.0 294.67 L1242.5 293.0 L1244.67 292.0 L1244.84 293.36 L1245.09 295.05 L1245.41 296.97 L1245.61 298.62 L1245.83 300.0 L1245.96 301.35 L1245.9 303.14 L1246.16 304.93 L1246.08 306.57 L1246.3 308.65 L1246.16 309.91 L1246.39 311.89 L1246.46 313.21 L1246.41 314.91 L1246.59 316.74 L1246.68 318.31 L1246.67 320.0 L1246.72 321.3 L1246.68 323.24 L1246.75 325.32 L1246.98 326.44 L1247.05 328.68 L1247.1 329.88 L1247.11 331.39 L1247.04 333.67 L1247.21 334.72 L1247.27 336.96 L1247.26 338.67 L1247.33 340.0 L1248.0 342.5 L1249.32 341.57 L1250.83 340.83 L1252.61 339.41 L1254.17 338.33 L1254.93 336.34 L1255.73 334.88 L1256.67 333.33 L1257.7 331.52 L1258.9 329.71 L1260.0 328.33 L1261.13 326.69 L1262.23 325.2 L1263.33 323.33 L1263.9 322.0 L1264.56 319.79 L1265.33 318.33 L1265.62 316.52 L1265.78 315.32 L1265.96 313.07 L1266.17 311.72 L1266.56 310.22 L1266.67 308.33 L1266.97 306.63 L1267.21 305.26 L1267.61 303.1 L1267.66 302.03 L1268.03 300.2 L1268.33 298.33 L1268.75 296.32 L1269.39 294.75 L1269.71 293.11 L1270.4 291.45 L1270.83 290.0 L1273.33 288.33 L1274.2 290.0 L1274.92 291.64 L1275.83 293.33 L1275.95 294.63 L1276.11 296.32 L1276.3 298.42 L1276.53 299.98 L1276.63 301.53 L1276.85 303.62 L1277.0 305.0 L1277.08 306.6 L1277.1 308.3 L1277.14 310.31 L1277.36 312.0 L1277.26 313.62 L1277.53 315.01 L1277.41 316.51 L1277.49 318.5 L1277.54 320.06 L1277.64 322.01 L1277.81 323.03 L1277.83 325.0 L1277.89 326.63 L1278.03 328.5 L1277.95 330.26 L1278.03 331.62 L1278.1 333.57 L1278.12 335.6 L1278.18 336.94 L1278.26 338.99 L1278.23 341.11 L1278.33 342.5 L1280.83 341.33 L1283.33 340.0 L1284.34 338.29 L1285.49 336.89 L1286.67 335.0 L1287.57 333.47 L1288.43 331.26 L1289.17 329.67 L1290.26 328.39 L1291.5 327.15 L1292.5 325.83 L1293.61 324.44 L1294.8 322.9 L1295.83 321.67 L1296.88 320.42 L1298.0 319.17 L1298.17 317.11 L1298.54 315.76 L1298.8 314.03 L1299.01 311.97 L1299.17 310.0 L1299.48 308.49 L1299.57 306.89 L1299.83 305.24 L1300.22 303.14 L1300.36 301.3 L1300.66 299.88 L1300.83 298.33 L1301.47 296.83 L1301.95 295.49 L1302.5 293.25 L1303.0 292.0 L1305.0 292.0 L1306.37 293.62 L1307.5 295.83 L1307.69 297.95 L1308.01 299.26 L1308.32 301.53 L1308.35 303.26 L1308.67 305.0 L1308.65 306.84 L1308.92 308.61 L1309.03 310.22 L1309.14 311.72 L1309.12 313.44 L1309.18 314.91 L1309.23 316.3 L1309.33 318.56 L1309.55 320.11 L1309.58 321.81 L1309.67 323.33 L1309.72 324.86 L1309.91 326.43 L1310.09 328.47 L1310.19 329.87 L1310.14 331.98 L1310.32 333.68 L1310.46 335.35 L1310.5 336.67 L1312.5 335.0 L1314.17 332.5 L1315.83 330.0 L1317.03 331.12 L1318.33 332.5 L1320.83 331.67 L1321.66 330.3 L1322.58 328.54 L1323.33 327.5 L1324.44 326.14 L1325.5 324.91 L1326.67 323.33 L1329.17 322.0 L1330.85 320.77 L1332.5 320.0 L1333.02 318.14 L1333.51 316.34 L1334.17 315.0 L1334.8 313.22 L1335.45 312.01 L1336.02 309.93 L1336.67 308.33 L1337.5 306.46 L1338.25 305.35 L1339.17 303.33 L1340.46 301.61 L1341.67 300.0 L1344.17 301.67 L1344.3 303.54 L1344.51 305.11 L1344.47 306.97 L1344.76 308.36 L1344.69 310.02 L1344.78 311.87 L1345.0 313.33 L1345.1 314.73 L1345.24 316.49 L1345.23 318.5 L1345.4 320.2 L1345.45 321.82 L1345.46 323.28 L1345.75 324.98 L1345.63 326.96 L1345.83 328.33 L1346.05 329.67 L1346.38 331.81 L1346.67 333.33 L1349.17 333.67 L1350.82 331.97 L1352.5 330.83 L1353.81 328.97 L1355.0 327.0 L1355.87 325.51 L1356.67 324.17 L1359.17 323.0 L1360.45 322.05 L1361.67 320.83 L1362.35 318.82 L1362.81 317.22 L1363.43 315.81 L1364.17 314.17 L1364.7 311.9 L1365.18 310.25 L1365.83 308.33 L1366.75 306.9 L1367.52 304.77 L1368.33 303.0 L1370.83 302.0 L1371.78 303.36 L1372.5 305.0 L1372.59 306.38 L1372.86 308.12 L1372.89 310.01 L1373.15 311.59 L1373.26 313.15 L1373.33 315.0 L1373.46 316.94 L1373.6 318.47 L1373.71 320.32 L1373.88 322.24 L1374.11 323.78 L1374.18 325.68 L1374.33 327.5 L1375.33 329.67 L1377.5 328.33 L1380.0 327.5 L1381.1 326.4 L1382.32 324.63 L1383.33 323.33 L1384.65 322.03 L1385.83 320.0 L1387.5 322.5 L1390.0 321.67 L1391.29 319.93 L1392.5 318.33 L1395.0 319.17 L1395.51 317.41 L1396.22 315.45 L1396.67 313.33 L1397.26 311.51 L1397.81 309.39 L1398.33 307.5 L1399.64 306.04 L1400.83 305.0 L1403.33 305.33 L1405.83 306.67 L1407.03 308.36 L1408.0 310.0 L1408.19 311.55 L1408.26 312.97 L1408.36 315.2 L1408.49 316.75 L1408.81 318.26 L1408.83 320.0 L1409.07 321.44 L1409.13 323.0 L1409.33 325.24 L1409.41 326.58 L1409.59 328.49 L1409.67 330.0 L1412.5 329.67 L1414.18 330.02 L1415.83 330.0 L1417.55 328.56 L1419.17 327.5 L1420.29 326.16 L1421.3 325.09 L1422.5 323.33 L1424.12 322.29 L1425.83 320.83 L1427.61 319.59 L1429.17 318.0 L1429.6 316.25 L1430.0 314.86 L1430.45 313.0 L1430.83 311.67 L1431.37 310.14 L1431.9 307.84 L1432.24 306.11 L1432.82 304.41 L1433.33 302.5 L1434.7 301.27 L1435.83 300.0 L1438.33 299.67 L1439.69 298.64 L1440.83 297.5 L1441.09 299.19 L1441.17 300.79 L1441.46 303.06 L1441.58 304.97 L1441.77 306.35 L1442.0 308.33 L1441.97 310.03 L1442.2 311.57 L1442.2 313.06 L1442.44 315.28 L1442.34 316.47 L1442.4 318.04 L1442.64 320.22 L1442.66 321.49 L1442.63 323.48 L1442.83 325.0 L1443.04 327.03 L1443.12 328.35 L1443.15 330.51 L1443.24 332.43 L1443.39 333.91 L1443.62 335.67 L1443.67 337.5 L1445.2 335.89 L1446.67 334.17 L1449.17 332.5 L1450.77 331.21 L1452.5 329.17 L1453.64 327.57 L1454.83 326.12 L1455.83 325.0 L1458.33 323.33 L1460.0 322.0 L1460.0 320.83 L1460.4 318.83 L1460.91 317.03 L1461.29 315.52 L1461.67 313.33 L1461.97 311.41 L1462.27 310.15 L1462.76 308.62 L1462.97 306.46 L1463.39 304.79 L1463.67 303.33 L1464.44 301.32 L1465.19 299.66 L1465.83 298.33 L1466.68 296.42 L1467.39 294.14 L1468.33 292.5 L1470.0 292.0 L1470.62 293.47 L1471.09 295.24 L1471.4 296.42 L1472.0 298.33 L1472.16 299.63 L1472.17 301.42 L1472.38 303.46 L1472.44 304.86 L1472.57 306.5 L1472.63 308.22 L1472.73 309.81 L1472.77 311.48 L1473.0 313.33 L1473.09 314.85 L1473.04 316.49 L1473.19 318.59 L1473.22 320.01 L1473.4 321.96 L1473.44 323.43 L1473.47 325.15 L1473.51 326.6 L1473.6 328.34 L1473.67 330.0 L1473.79 331.83 L1473.98 333.83 L1473.89 335.21 L1474.0 337.07 L1474.25 339.25 L1474.33 340.83 L1476.67 340.0 L1477.85 338.59 L1479.17 337.5 L1480.36 336.11 L1481.44 334.31 L1482.5 332.5 L1483.6 331.19 L1484.73 329.42 L1485.83 328.0 L1487.2 326.79 L1488.33 325.0 L1489.24 323.65 L1489.94 321.34 L1490.83 320.0 L1491.12 318.69 L1491.34 316.68 L1491.67 315.28 L1491.84 313.71 L1492.1 312.04 L1492.5 310.0 L1492.89 308.07 L1493.24 306.77 L1493.86 305.05 L1494.23 303.28 L1494.6 301.74 L1495.0 300.0 L1496.24 298.09 L1497.5 296.67 L1498.79 295.72 L1500.0 294.17 L1502.0 295.83 L1502.13 297.4 L1502.25 299.43 L1502.46 301.25 L1502.5 302.61 L1502.65 304.88 L1502.92 306.22 L1503.0 308.33 L1503.18 309.87 L1503.04 311.71 L1503.14 313.43 L1503.32 315.24 L1503.23 316.86 L1503.47 317.98 L1503.4 319.73 L1503.46 321.31 L1503.71 323.31 L1503.67 325.0 L1503.67 326.53 L1503.71 328.58 L1503.88 330.1 L1503.8 332.0 L1503.94 333.38 L1503.97 335.24 L1504.01 336.83 L1504.26 338.33 L1504.16 339.8 L1504.31 341.98 L1504.33 343.33 L1505.42 340.92 L1506.67 339.17 L1507.73 337.3 L1508.94 336.1 L1510.0 334.17 L1511.08 333.28 L1512.06 331.77 L1513.13 330.59 L1514.17 329.17 L1515.0 327.37 L1515.84 326.16 L1516.55 324.45 L1517.5 323.33 L1518.01 322.03 L1518.5 319.87 L1519.23 318.41 L1519.67 316.67 L1519.84 314.76 L1520.07 313.34 L1520.1 311.72 L1520.39 309.77 L1520.59 308.01 L1520.59 306.31 L1520.83 305.0 L1521.35 303.31 L1521.76 301.76 L1522.19 300.2 L1522.64 298.0 L1523.0 296.67 L1524.08 295.15 L1525.33 294.17 L1526.89 293.82 L1528.67 294.17 L1528.97 296.33 L1529.23 297.61 L1529.69 300.06 L1530.0 301.67 L1529.98 303.65 L1530.13 304.71 L1530.18 306.44 L1530.4 308.11 L1530.38 309.75 L1530.52 311.7 L1530.66 313.07 L1530.71 315.01 L1530.83 316.67 L1530.8 318.32 L1530.92 320.09 L1530.96 321.54 L1531.19 323.63 L1531.26 324.92 L1531.25 327.0 L1531.47 328.24 L1531.55 329.9 L1531.48 331.97 L1531.67 333.33 L1531.75 335.0 L1532.0 337.19 L1532.17 338.98 L1532.17 340.43 L1532.33 342.5 L1533.56 341.1 L1534.67 339.17 L1535.49 337.42 L1536.17 336.43 L1536.82 334.69 L1537.5 333.33 L1538.43 332.22 L1539.26 330.47 L1540.08 329.34 L1540.83 327.5 L1542.05 325.95 L1543.03 323.9 L1544.17 322.5 L1546.67 320.83 L1546.91 319.05 L1547.23 317.38 L1547.61 315.43 L1548.02 313.37 L1548.33 311.67 L1548.56 309.77 L1548.92 308.61 L1549.01 306.49 L1549.21 305.15 L1549.45 303.6 L1549.72 301.71 L1550.0 300.0 L1550.55 298.06 L1551.29 296.51 L1552.0 295.33 L1554.17 295.0 L1555.54 296.49 L1556.67 298.33 L1556.68 300.1 L1556.84 301.83 L1557.08 303.32 L1557.25 305.27 L1557.22 306.61 L1557.34 308.25 L1557.5 310.0 L1557.58 311.85 L1557.6 313.47 L1557.89 315.21 L1557.9 316.44 L1557.85 318.08 L1557.98 319.93 L1558.16 321.84 L1558.35 323.47 L1558.33 325.0 L1558.35 326.45 L1558.56 328.22 L1558.73 330.6 L1558.9 332.18 L1558.84 333.83 L1558.94 335.82 L1559.17 337.5 L1561.67 335.83 L1562.67 334.24 L1563.79 332.8 L1565.0 331.67 L1565.95 330.44 L1567.16 329.25 L1568.04 327.8 L1569.17 326.67 L1570.89 325.13 L1572.5 323.33 L1574.18 321.96 L1575.83 320.0 L1577.03 318.67 L1578.17 317.35 L1579.17 315.83 L1579.79 313.72 L1580.27 312.04 L1580.83 310.0 L1581.24 307.96 L1581.69 306.49 L1582.08 305.0 L1582.5 303.33 L1583.5 301.74 L1584.67 300.83 L1587.5 301.67 L1588.27 303.42 L1589.02 305.38 L1589.67 306.67 L1589.85 308.18 L1590.13 310.01 L1590.35 311.59 L1590.42 313.32 L1590.6 314.99 L1590.83 316.67 L1590.89 318.72 L1591.06 319.93 L1591.25 321.8 L1591.48 323.07 L1591.73 325.08 L1591.78 326.62 L1592.0 328.33 L1592.54 329.9 L1592.77 331.45 L1593.33 333.33 L1595.0 333.33 L1595.55 331.68 L1596.03 329.16 L1596.67 327.5 L1597.56 326.41 L1598.38 324.39 L1599.17 323.33 L1601.67 322.0 L1603.67 324.17 L1605.83 322.5 L1606.9 321.03 L1608.0 320.0 L1608.09 318.41 L1608.35 317.0 L1608.65 314.73 L1608.67 313.04 L1608.97 311.78 L1609.17 310.0 L1609.41 308.64 L1609.39 306.44 L1609.66 305.08 L1609.93 303.18 L1610.03 301.44 L1610.27 299.67 L1610.33 298.33 L1610.78 296.8 L1611.22 294.44 L1611.65 293.01 L1612.0 290.83 L1612.84 292.15 L1613.67 294.17 L1614.4 295.84 L1615.2 298.4 L1615.83 300.0 L1616.57 301.48 L1617.2 303.19 L1618.0 305.0 L1618.4 306.85 L1618.65 308.21 L1619.06 310.15 L1619.24 311.64 L1619.67 313.33 L1619.92 314.69 L1620.34 316.91 L1620.64 318.44 L1620.93 319.9 L1621.36 322.02 L1621.67 323.33 L1622.05 324.72 L1622.36 326.74 L1622.69 328.54 L1623.0 330.0 L1623.28 331.89 L1623.37 333.13 L1623.48 334.7 L1623.7 336.3 L1623.83 338.0 L1625.21 336.8 L1626.67 335.83 L1627.85 334.43 L1628.97 332.63 L1630.0 330.83 L1631.14 329.08 L1632.18 327.31 L1633.33 325.83 L1634.23 324.14 L1634.95 323.38 L1635.83 321.67 L1638.33 322.5 L1639.49 320.74 L1640.83 319.17 L1643.0 317.5" stroke="#2c2c2c" stroke-width="1.5" fill="none" stroke-linejoin="round"/><rect x="992.1" y="275" width="1.9" height="86" fill="#c476c4"/><rect x="991" y="273" width="4" height="4" fill="#800080"/><path d="M342.3 547.3H1643.4" stroke="#62b262" stroke-width="1.4" fill="none"/><path d="M342.3 742.7H379.3V739H408.3V742.7H494.3V739H596V742.7H740V739H784.3V742.7H813.3V739H827.3V735.7H842V713.7H856V721.7H870.7V742.7H885V753.7H928V750H1001V746H1015V735.7H1030V739H1044.3V731.7H1059V735.7H1087.7V739H1102.3V742.7H1232.3V739H1305V742.7H1464V739H1507V742.7H1521.7V739H1622.7V735.7H1643.3" stroke="#4c9f4c" stroke-width="1.4" fill="none"/><rect x="342.1" y="251.1" width="1302" height="136.1" fill="none" stroke="#666" stroke-width="1.8"/><rect x="342.1" y="435.1" width="1302" height="136.10000000000002" fill="none" stroke="#666" stroke-width="1.8"/><rect x="342.1" y="619.1" width="1302" height="136.10000000000002" fill="none" stroke="#666" stroke-width="1.8"/><rect x="342.1" y="803.1" width="1302" height="136.10000000000002" fill="none" stroke="#666" stroke-width="1.8"/><path d="M1580 240.1H1595" stroke="#000" stroke-width="2"/><path d="M1538 424.1H1552.5" stroke="#0a800a" stroke-width="2"/><path d="M1583 424.1H1597.5" stroke="#ff0000" stroke-width="2"/><path d="M1579 608.1H1594" stroke="#006400" stroke-width="2"/><path d="M1575 792.1H1589" stroke="#a0a0a0" stroke-width="2"/><path d="M1556 976.1H1572" stroke="#0000ff" stroke-width="2"/></svg>
<span class="t" style="left:987.10px;top:256.00px;font-size:10px;line-height:13px;color:#000;letter-spacing:-1.692px;">CA</span>
<span class="t" style="left:342.50px;top:235.00px;font-size:10px;line-height:13px;color:#000;letter-spacing:0.095px;">Duration 00:03:00 AHI 20.00 Flow Rate: 0.00</span>
<span class="t" style="left:345.20px;top:418.00px;font-size:10px;line-height:13px;color:#000;letter-spacing:-0.094px;">Pressure: 0.00 EPAP: 0.00</span>
<span class="t" style="left:345.20px;top:602.00px;font-size:10px;line-height:13px;color:#000;letter-spacing:-0.079px;">Leak Rate: 0.00</span>
<span class="t" style="left:345.20px;top:786.00px;font-size:10px;line-height:13px;color:#000;letter-spacing:0.106px;">Flow Limit.: 0.00</span>
<span class="t" style="left:345.20px;top:970.00px;font-size:10px;line-height:13px;color:#000;letter-spacing:0.045px;">Mask Pressure: 0.00</span>
<span class="t" style="left:1598.10px;top:234.00px;font-size:10px;line-height:13px;color:#000;letter-spacing:-0.127px;">Flow Rate</span>
<span class="t" style="left:1601.60px;top:418.00px;font-size:10px;line-height:13px;color:#000;letter-spacing:0.070px;">Pressure</span>
<span class="t" style="left:1555.50px;top:418.00px;font-size:10px;line-height:13px;color:#000;letter-spacing:-0.813px;">EPAP</span>
<span class="t" style="left:1597.60px;top:602.00px;font-size:10px;line-height:13px;color:#000;letter-spacing:-0.135px;">Leak Rate</span>
<span class="t" style="left:1592.60px;top:786.00px;font-size:10px;line-height:13px;color:#000;letter-spacing:0.172px;">Flow Limit.</span>
<span class="t" style="left:1574.60px;top:970.00px;font-size:10px;line-height:13px;color:#000;letter-spacing:0.068px;">Mask Pressure</span>
<span class="t" style="left:314.26px;top:248.00px;font-size:10px;line-height:13px;color:#000;letter-spacing:0.195px;">95.0</span>
<span class="t" style="left:314.26px;top:275.00px;font-size:10px;line-height:13px;color:#000;letter-spacing:0.195px;">57.0</span>
<span class="t" style="left:314.26px;top:302.00px;font-size:10px;line-height:13px;color:#000;letter-spacing:0.195px;">19.0</span>
<span class="t" style="left:310.83px;top:329.00px;font-size:10px;line-height:13px;color:#000;letter-spacing:0.171px;">-19.0</span>
<span class="t" style="left:310.83px;top:356.00px;font-size:10px;line-height:13px;color:#000;letter-spacing:0.171px;">-57.0</span>
<span class="t" style="left:310.83px;top:383.00px;font-size:10px;line-height:13px;color:#000;letter-spacing:0.171px;">-95.0</span>
<span class="t" style="left:323.45px;top:400.00px;font-size:10px;line-height:13px;color:#000;letter-spacing:0.025px;">22:35:20</span>
<span class="t" style="left:395.73px;top:400.00px;font-size:10px;line-height:13px;color:#000;letter-spacing:0.025px;">22:35:30</span>
<span class="t" style="left:468.02px;top:400.00px;font-size:10px;line-height:13px;color:#000;letter-spacing:0.025px;">22:35:40</span>
<span class="t" style="left:540.30px;top:400.00px;font-size:10px;line-height:13px;color:#000;letter-spacing:0.025px;">22:35:50</span>
<span class="t" style="left:612.58px;top:400.00px;font-size:10px;line-height:13px;color:#000;letter-spacing:0.025px;">22:36:00</span>
<span class="t" style="left:684.87px;top:400.00px;font-size:10px;line-height:13px;color:#000;letter-spacing:0.025px;">22:36:10</span>
<span class="t" style="left:757.15px;top:400.00px;font-size:10px;line-height:13px;color:#000;letter-spacing:0.025px;">22:36:20</span>
<span class="t" style="left:829.43px;top:400.00px;font-size:10px;line-height:13px;color:#000;letter-spacing:0.025px;">22:36:30</span>
<span class="t" style="left:901.72px;top:400.00px;font-size:10px;line-height:13px;color:#000;letter-spacing:0.025px;">22:36:40</span>
<span class="t" style="left:974.00px;top:400.00px;font-size:10px;line-height:13px;color:#000;letter-spacing:0.025px;">22:36:50</span>
<span class="t" style="left:1046.28px;top:400.00px;font-size:10px;line-height:13px;color:#000;letter-spacing:0.025px;">22:37:00</span>
<span class="t" style="left:1118.57px;top:400.00px;font-size:10px;line-height:13px;color:#000;letter-spacing:0.025px;">22:37:10</span>
<span class="t" style="left:1190.85px;top:400.00px;font-size:10px;line-height:13px;color:#000;letter-spacing:0.025px;">22:37:20</span>
<span class="t" style="left:1263.13px;top:400.00px;font-size:10px;line-height:13px;color:#000;letter-spacing:0.025px;">22:37:30</span>
<span class="t" style="left:1335.42px;top:400.00px;font-size:10px;line-height:13px;color:#000;letter-spacing:0.025px;">22:37:40</span>
<span class="t" style="left:1407.70px;top:400.00px;font-size:10px;line-height:13px;color:#000;letter-spacing:0.025px;">22:37:50</span>
<span class="t" style="left:1479.98px;top:400.00px;font-size:10px;line-height:13px;color:#000;letter-spacing:0.025px;">22:38:00</span>
<span class="t" style="left:1552.27px;top:400.00px;font-size:10px;line-height:13px;color:#000;letter-spacing:0.025px;">22:38:10</span>
<span class="t" style="left:169.3px;top:310.65px;width:200.03px;text-indent:0;text-align:center;font-size:14.5px;line-height:20px;font-weight:bold;transform:rotate(-90deg);transform-origin:100px 10px;letter-spacing:0.028px;">Flow Rate</span>
<span class="t" style="left:314.26px;top:432.00px;font-size:10px;line-height:13px;color:#000;letter-spacing:0.195px;">10.0</span>
<span class="t" style="left:319.98px;top:477.00px;font-size:10px;line-height:13px;color:#000;letter-spacing:0.208px;">8.0</span>
<span class="t" style="left:319.98px;top:522.00px;font-size:10px;line-height:13px;color:#000;letter-spacing:0.208px;">6.0</span>
<span class="t" style="left:319.98px;top:567.00px;font-size:10px;line-height:13px;color:#000;letter-spacing:0.208px;">4.0</span>
<span class="t" style="left:323.45px;top:584.00px;font-size:10px;line-height:13px;color:#000;letter-spacing:0.025px;">22:35:20</span>
<span class="t" style="left:395.73px;top:584.00px;font-size:10px;line-height:13px;color:#000;letter-spacing:0.025px;">22:35:30</span>
<span class="t" style="left:468.02px;top:584.00px;font-size:10px;line-height:13px;color:#000;letter-spacing:0.025px;">22:35:40</span>
<span class="t" style="left:540.30px;top:584.00px;font-size:10px;line-height:13px;color:#000;letter-spacing:0.025px;">22:35:50</span>
<span class="t" style="left:612.58px;top:584.00px;font-size:10px;line-height:13px;color:#000;letter-spacing:0.025px;">22:36:00</span>
<span class="t" style="left:684.87px;top:584.00px;font-size:10px;line-height:13px;color:#000;letter-spacing:0.025px;">22:36:10</span>
<span class="t" style="left:757.15px;top:584.00px;font-size:10px;line-height:13px;color:#000;letter-spacing:0.025px;">22:36:20</span>
<span class="t" style="left:829.43px;top:584.00px;font-size:10px;line-height:13px;color:#000;letter-spacing:0.025px;">22:36:30</span>
<span class="t" style="left:901.72px;top:584.00px;font-size:10px;line-height:13px;color:#000;letter-spacing:0.025px;">22:36:40</span>
<span class="t" style="left:974.00px;top:584.00px;font-size:10px;line-height:13px;color:#000;letter-spacing:0.025px;">22:36:50</span>
<span class="t" style="left:1046.28px;top:584.00px;font-size:10px;line-height:13px;color:#000;letter-spacing:0.025px;">22:37:00</span>
<span class="t" style="left:1118.57px;top:584.00px;font-size:10px;line-height:13px;color:#000;letter-spacing:0.025px;">22:37:10</span>
<span class="t" style="left:1190.85px;top:584.00px;font-size:10px;line-height:13px;color:#000;letter-spacing:0.025px;">22:37:20</span>
<span class="t" style="left:1263.13px;top:584.00px;font-size:10px;line-height:13px;color:#000;letter-spacing:0.025px;">22:37:30</span>
<span class="t" style="left:1335.42px;top:584.00px;font-size:10px;line-height:13px;color:#000;letter-spacing:0.025px;">22:37:40</span>
<span class="t" style="left:1407.70px;top:584.00px;font-size:10px;line-height:13px;color:#000;letter-spacing:0.025px;">22:37:50</span>
<span class="t" style="left:1479.98px;top:584.00px;font-size:10px;line-height:13px;color:#000;letter-spacing:0.025px;">22:38:00</span>
<span class="t" style="left:1552.27px;top:584.00px;font-size:10px;line-height:13px;color:#000;letter-spacing:0.025px;">22:38:10</span>
<span class="t" style="left:169.3px;top:494.65000000000003px;width:200.02px;text-indent:0;text-align:center;font-size:14.5px;line-height:20px;font-weight:bold;transform:rotate(-90deg);transform-origin:100px 10px;letter-spacing:0.019px;">Pressure</span>
<span class="t" style="left:314.26px;top:616.00px;font-size:10px;line-height:13px;color:#000;letter-spacing:0.195px;">45.0</span>
<span class="t" style="left:314.26px;top:643.00px;font-size:10px;line-height:13px;color:#000;letter-spacing:0.195px;">36.0</span>
<span class="t" style="left:314.26px;top:670.00px;font-size:10px;line-height:13px;color:#000;letter-spacing:0.195px;">27.0</span>
<span class="t" style="left:314.26px;top:697.00px;font-size:10px;line-height:13px;color:#000;letter-spacing:0.195px;">18.0</span>
<span class="t" style="left:319.98px;top:724.00px;font-size:10px;line-height:13px;color:#000;letter-spacing:0.208px;">9.0</span>
<span class="t" style="left:319.98px;top:751.00px;font-size:10px;line-height:13px;color:#000;letter-spacing:0.208px;">0.0</span>
<span class="t" style="left:323.45px;top:768.00px;font-size:10px;line-height:13px;color:#000;letter-spacing:0.025px;">22:35:20</span>
<span class="t" style="left:395.73px;top:768.00px;font-size:10px;line-height:13px;color:#000;letter-spacing:0.025px;">22:35:30</span>
<span class="t" style="left:468.02px;top:768.00px;font-size:10px;line-height:13px;color:#000;letter-spacing:0.025px;">22:35:40</span>
<span class="t" style="left:540.30px;top:768.00px;font-size:10px;line-height:13px;color:#000;letter-spacing:0.025px;">22:35:50</span>
<span class="t" style="left:612.58px;top:768.00px;font-size:10px;line-height:13px;color:#000;letter-spacing:0.025px;">22:36:00</span>
<span class="t" style="left:684.87px;top:768.00px;font-size:10px;line-height:13px;color:#000;letter-spacing:0.025px;">22:36:10</span>
<span class="t" style="left:757.15px;top:768.00px;font-size:10px;line-height:13px;color:#000;letter-spacing:0.025px;">22:36:20</span>
<span class="t" style="left:829.43px;top:768.00px;font-size:10px;line-height:13px;color:#000;letter-spacing:0.025px;">22:36:30</span>
<span class="t" style="left:901.72px;top:768.00px;font-size:10px;line-height:13px;color:#000;letter-spacing:0.025px;">22:36:40</span>
<span class="t" style="left:974.00px;top:768.00px;font-size:10px;line-height:13px;color:#000;letter-spacing:0.025px;">22:36:50</span>
<span class="t" style="left:1046.28px;top:768.00px;font-size:10px;line-height:13px;color:#000;letter-spacing:0.025px;">22:37:00</span>
<span class="t" style="left:1118.57px;top:768.00px;font-size:10px;line-height:13px;color:#000;letter-spacing:0.025px;">22:37:10</span>
<span class="t" style="left:1190.85px;top:768.00px;font-size:10px;line-height:13px;color:#000;letter-spacing:0.025px;">22:37:20</span>
<span class="t" style="left:1263.13px;top:768.00px;font-size:10px;line-height:13px;color:#000;letter-spacing:0.025px;">22:37:30</span>
<span class="t" style="left:1335.42px;top:768.00px;font-size:10px;line-height:13px;color:#000;letter-spacing:0.025px;">22:37:40</span>
<span class="t" style="left:1407.70px;top:768.00px;font-size:10px;line-height:13px;color:#000;letter-spacing:0.025px;">22:37:50</span>
<span class="t" style="left:1479.98px;top:768.00px;font-size:10px;line-height:13px;color:#000;letter-spacing:0.025px;">22:38:00</span>
<span class="t" style="left:1552.27px;top:768.00px;font-size:10px;line-height:13px;color:#000;letter-spacing:0.025px;">22:38:10</span>
<span class="t" style="left:169.3px;top:679.6500000000001px;width:200.25px;text-indent:0;text-align:center;font-size:14.5px;line-height:20px;font-weight:bold;transform:rotate(-90deg);transform-origin:100px 10px;letter-spacing:0.249px;">Leak Rate</span>
<span class="t" style="left:314.26px;top:800.00px;font-size:10px;line-height:13px;color:#000;letter-spacing:0.195px;">1.00</span>
<span class="t" style="left:314.26px;top:827.00px;font-size:10px;line-height:13px;color:#000;letter-spacing:0.195px;">0.80</span>
<span class="t" style="left:314.26px;top:854.00px;font-size:10px;line-height:13px;color:#000;letter-spacing:0.195px;">0.60</span>
<span class="t" style="left:314.26px;top:881.00px;font-size:10px;line-height:13px;color:#000;letter-spacing:0.195px;">0.40</span>
<span class="t" style="left:314.26px;top:908.00px;font-size:10px;line-height:13px;color:#000;letter-spacing:0.195px;">0.20</span>
<span class="t" style="left:314.26px;top:935.00px;font-size:10px;line-height:13px;color:#000;letter-spacing:0.195px;">0.00</span>
<span class="t" style="left:323.45px;top:952.00px;font-size:10px;line-height:13px;color:#000;letter-spacing:0.025px;">22:35:20</span>
<span class="t" style="left:395.73px;top:952.00px;font-size:10px;line-height:13px;color:#000;letter-spacing:0.025px;">22:35:30</span>
<span class="t" style="left:468.02px;top:952.00px;font-size:10px;line-height:13px;color:#000;letter-spacing:0.025px;">22:35:40</span>
<span class="t" style="left:540.30px;top:952.00px;font-size:10px;line-height:13px;color:#000;letter-spacing:0.025px;">22:35:50</span>
<span class="t" style="left:612.58px;top:952.00px;font-size:10px;line-height:13px;color:#000;letter-spacing:0.025px;">22:36:00</span>
<span class="t" style="left:684.87px;top:952.00px;font-size:10px;line-height:13px;color:#000;letter-spacing:0.025px;">22:36:10</span>
<span class="t" style="left:757.15px;top:952.00px;font-size:10px;line-height:13px;color:#000;letter-spacing:0.025px;">22:36:20</span>
<span class="t" style="left:829.43px;top:952.00px;font-size:10px;line-height:13px;color:#000;letter-spacing:0.025px;">22:36:30</span>
<span class="t" style="left:901.72px;top:952.00px;font-size:10px;line-height:13px;color:#000;letter-spacing:0.025px;">22:36:40</span>
<span class="t" style="left:974.00px;top:952.00px;font-size:10px;line-height:13px;color:#000;letter-spacing:0.025px;">22:36:50</span>
<span class="t" style="left:1046.28px;top:952.00px;font-size:10px;line-height:13px;color:#000;letter-spacing:0.025px;">22:37:00</span>
<span class="t" style="left:1118.57px;top:952.00px;font-size:10px;line-height:13px;color:#000;letter-spacing:0.025px;">22:37:10</span>
<span class="t" style="left:1190.85px;top:952.00px;font-size:10px;line-height:13px;color:#000;letter-spacing:0.025px;">22:37:20</span>
<span class="t" style="left:1263.13px;top:952.00px;font-size:10px;line-height:13px;color:#000;letter-spacing:0.025px;">22:37:30</span>
<span class="t" style="left:1335.42px;top:952.00px;font-size:10px;line-height:13px;color:#000;letter-spacing:0.025px;">22:37:40</span>
<span class="t" style="left:1407.70px;top:952.00px;font-size:10px;line-height:13px;color:#000;letter-spacing:0.025px;">22:37:50</span>
<span class="t" style="left:1479.98px;top:952.00px;font-size:10px;line-height:13px;color:#000;letter-spacing:0.025px;">22:38:00</span>
<span class="t" style="left:1552.27px;top:952.00px;font-size:10px;line-height:13px;color:#000;letter-spacing:0.025px;">22:38:10</span>
<span class="t" style="left:169.3px;top:862.6500000000001px;width:200.21px;text-indent:0;text-align:center;font-size:14.5px;line-height:20px;font-weight:bold;transform:rotate(-90deg);transform-origin:100px 10px;letter-spacing:0.209px;">Flow Limit.</span>
<div class="b" style="left:251px;top:986px;width:1px;height:29px;background:#cfcfcf;"></div>
<div class="b" style="left:251px;top:1014px;width:1425px;height:1px;background:#d6d6d6;"></div>
<svg width="1680" height="1024"><path d="M265 997.8H273.4L269.2 1005.3Z" fill="#727272"/><path d="M1462 997.8H1470.4L1466.2 1005.3Z" fill="#727272"/></svg>
<span class="t" style="left:280.40px;top:994.00px;font-size:10px;line-height:13px;color:#222;letter-spacing:-0.413px;">Flags</span>
<span class="t" style="left:1477.50px;top:994.00px;font-size:10px;line-height:13px;color:#222;letter-spacing:0.142px;">Graphs</span>
<span class="t" style="left:863.50px;top:992.00px;font-size:12px;line-height:16px;color:#1a1a1a;letter-spacing:0.532px;">Sep 23 22:28:35.000</span>
<div class="b" style="left:312.4px;top:989px;width:84.3px;height:20.4px;background:#fff;border:1px solid #cdcdcd;border-radius:4.5px;box-shadow:0 0.5px 0.6px rgba(0,0,0,.18);"></div>
<div class="b" style="left:380.2px;top:989px;width:16.5px;height:20.4px;background:linear-gradient(#b2b1b7,#8a8990);border-radius:0 4.5px 4.5px 0;"></div>
<svg width="1680" height="1024"><path d="M384.9 997.6L388.5 994.3L392.1 997.6M384.9 1001.4L388.5 1004.7L392.1 1001.4" stroke="#fff" stroke-width="1.4" fill="none" stroke-linecap="round" stroke-linejoin="round"/></svg>
<div class="b" style="left:321.9px;top:995.8px;width:8.0px;height:5.4px;background:#000;"></div>
<div class="b" style="left:329.9px;top:995.8px;width:8.0px;height:5.4px;background:#3d8a0e;"></div>
<span class="t" style="left:341.30px;top:993.00px;font-size:10px;line-height:13px;color:#222;letter-spacing:-1.622px;">LL</span>
<div class="b" style="left:1520.8px;top:989px;width:150.9px;height:20.4px;background:#fff;border:1px solid #cdcdcd;border-radius:4.5px;box-shadow:0 0.5px 0.6px rgba(0,0,0,.18);"></div>
<div class="b" style="left:1655.2px;top:989px;width:16.5px;height:20.4px;background:linear-gradient(#b2b1b7,#8a8990);border-radius:0 4.5px 4.5px 0;"></div>
<svg width="1680" height="1024"><path d="M1659.9 997.6L1663.5 994.3L1667.1 997.6M1659.9 1001.4L1663.5 1004.7L1667.1 1001.4" stroke="#fff" stroke-width="1.4" fill="none" stroke-linecap="round" stroke-linejoin="round"/></svg>
<div class="b" style="left:1530.3px;top:995.8px;width:9.8px;height:5.4px;background:#000;"></div>
<div class="b" style="left:1540.1px;top:995.8px;width:9.8px;height:5.4px;background:#3d8a0e;"></div>
<span class="t" style="left:1553.30px;top:993.00px;font-size:10px;line-height:13px;color:#222;letter-spacing:-0.160px;">Event Flags</span>
<div class="b" style="left:1675px;top:986px;width:1px;height:29px;background:#d9d9d9;"></div>
</body></html>
